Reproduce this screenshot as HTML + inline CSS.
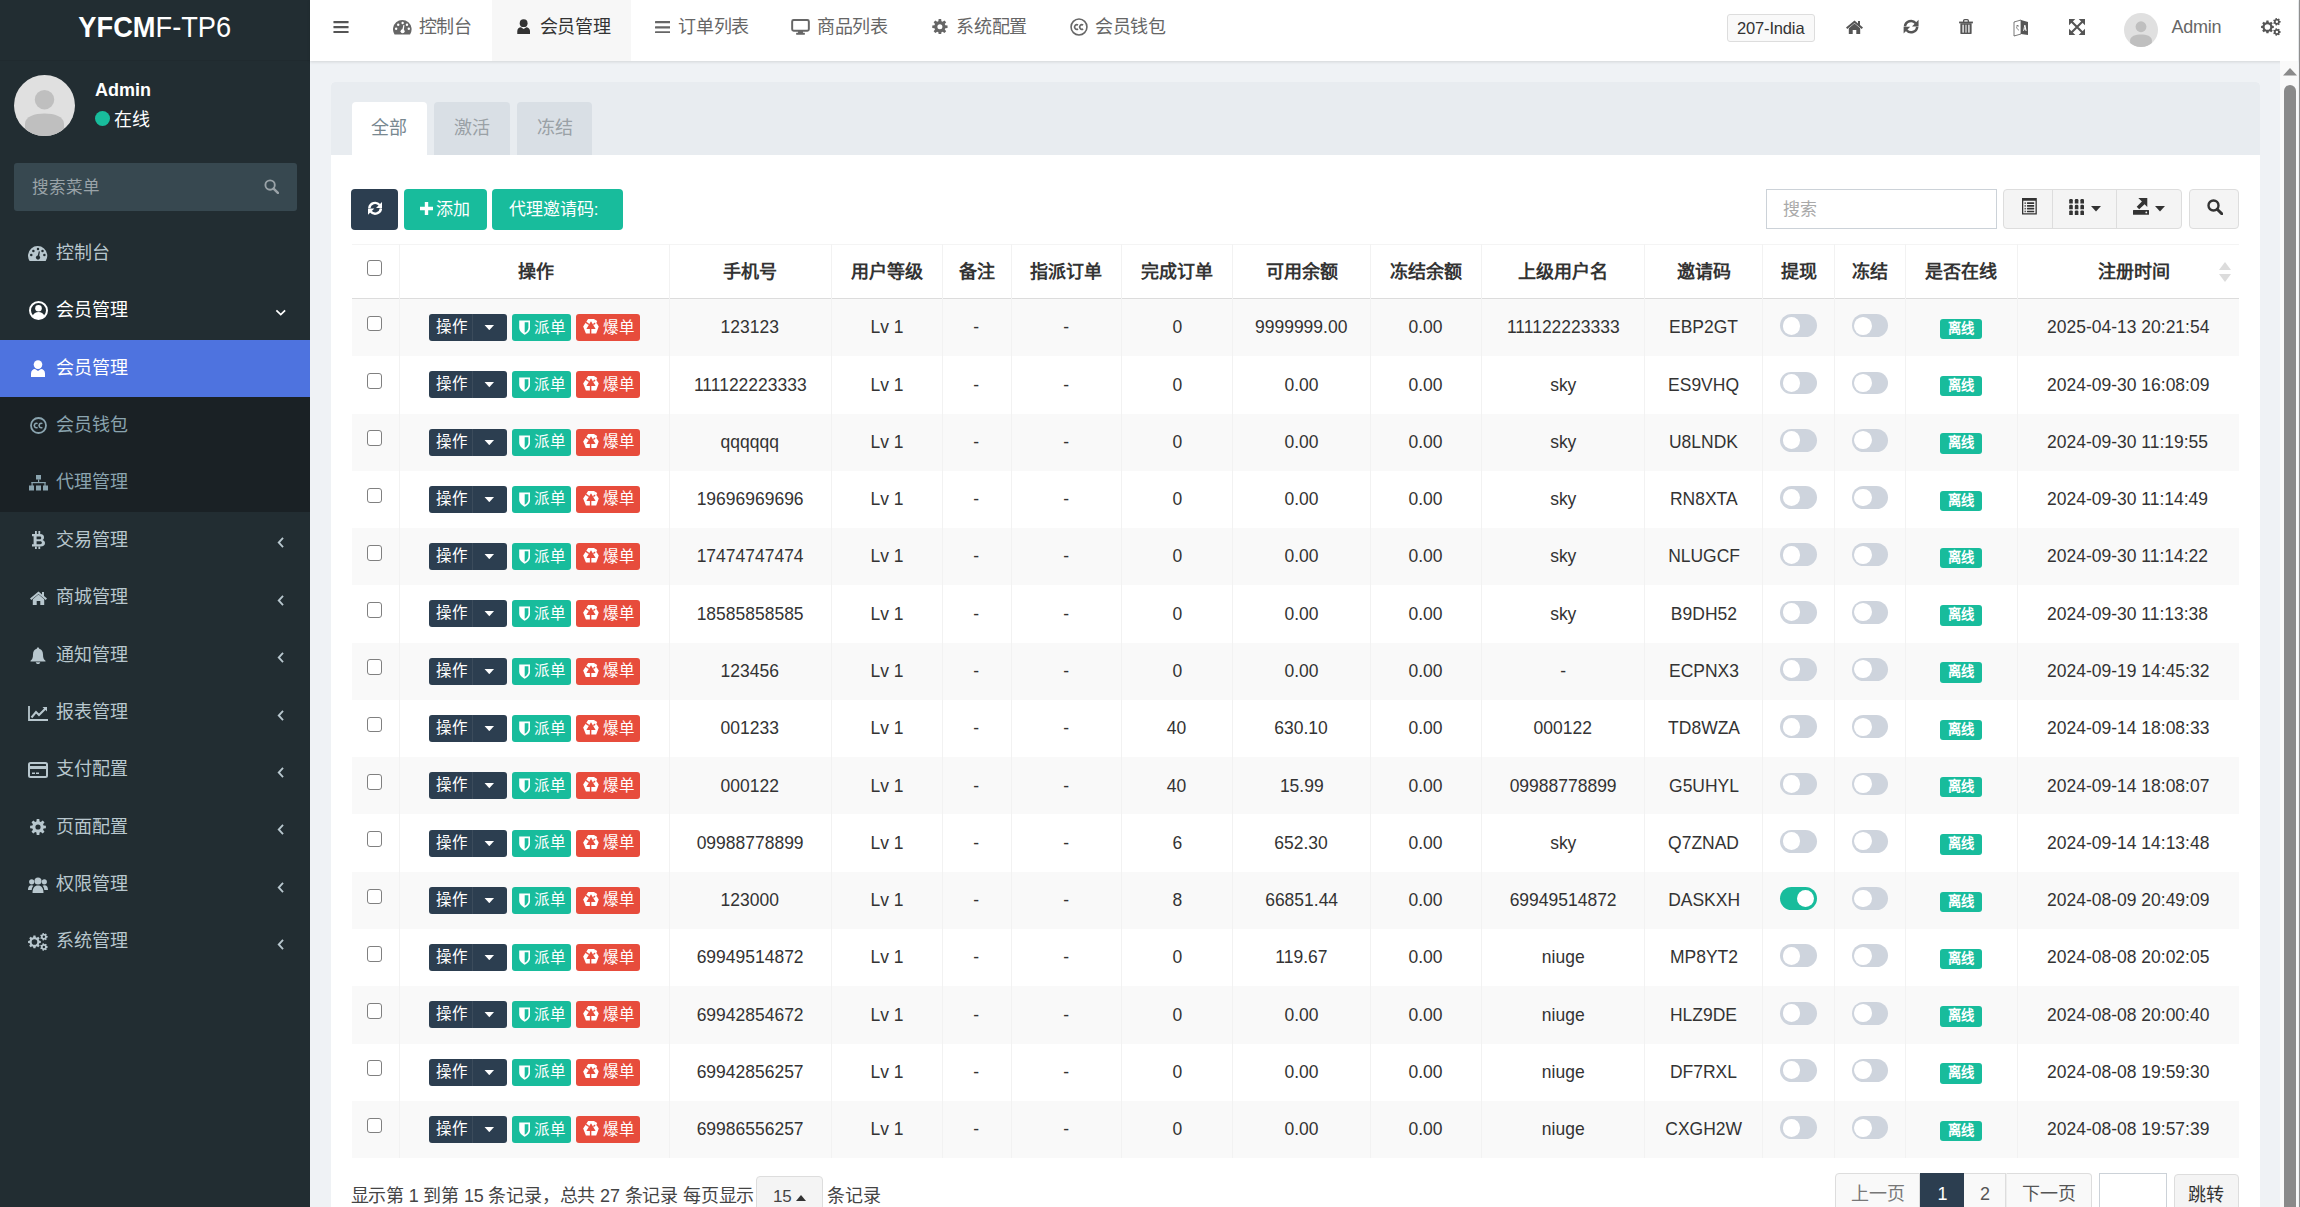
<!DOCTYPE html><html lang="zh-CN"><head><meta charset="utf-8"><style>
*{margin:0;padding:0;box-sizing:content-box}
html,body{width:2300px;height:1207px;overflow:hidden;background:#eff2f5;font-family:"Liberation Sans",sans-serif;position:relative}
svg{display:block}
#side{position:absolute;left:0;top:0;width:310px;height:1207px;background:#222d32;overflow:hidden}
.logo{position:absolute;left:0;top:0;width:310px;height:60px;line-height:53px;text-align:center;color:#fff;font-size:29.5px;border-bottom:1px solid #202a2f;letter-spacing:0}
.logo b{font-weight:bold}
#top{position:absolute;left:310px;top:0;width:1988px;height:61px;background:#fff;box-shadow:0 1px 3px rgba(0,0,0,0.12)}
#panel{position:absolute;left:331px;top:82px;width:1929px;height:1200px;background:#fff;border-radius:4px;overflow:hidden}
#phead{position:absolute;left:0;top:0;width:1929px;height:72.8px;background:#e8ecf0}
</style></head><body><div id="side"><div class="logo"><span style="display:inline-block;transform:scaleX(0.923);transform-origin:50% 50%"><b>YFCM</b>F-TP6</span></div><div style="position:absolute;left:13.7px;top:74.6px;"><svg width="61" height="61" viewBox="0 0 100 100" style=""><defs><clipPath id="cp61"><circle cx="50" cy="50" r="50"/></clipPath></defs><circle cx="50" cy="50" r="50" fill="#e0e0e0"/><g clip-path="url(#cp61)"><circle cx="50" cy="40.5" r="16" fill="#bfbfbf"/><path d="M18 100 L18 80 C18 68 34 63 50 63 C66 63 82 68 82 80 L82 100 Z" fill="#bfbfbf"/></g></svg></div><div style="position:absolute;left:95px;top:79.2px;font-weight:bold;font-size:18px;color:#fff;line-height:22px">Admin</div><div style="position:absolute;left:95px;top:111px;width:15px;height:15px;border-radius:50%;background:#18bc9c"></div><div style="position:absolute;left:114px;top:109px;font-size:18px;color:#fff;line-height:22px">在线</div><div style="position:absolute;left:13.9px;top:162.5px;width:283px;height:48.5px;background:#374850;border-radius:3px"><span style="position:absolute;left:18px;top:13px;color:#9aa3a8;font-size:16.5px;line-height:22px">搜索菜单</span><div style="position:absolute;left:250px;top:16px;"><svg width="15" height="15" viewBox="0 0 16 16" style=""><circle cx="6.5" cy="6.5" r="5" fill="none" stroke="#9aa3a8" stroke-width="2.0"/><path d="M10.2 10.2 L14.8 14.8" stroke="#9aa3a8" stroke-width="2.6" stroke-linecap="round"/></svg></div></div><div style="position:absolute;left:0px;top:224.9px;width:310px;height:57.38px;background:#222d32"><span class="mi" style="position:absolute;left:28px;top:0;width:20px;height:57.38px;display:flex;align-items:center;justify-content:center"><svg width="19.3" height="15" viewBox="0 0 19.3 15" style=""><path fill="#b8c7ce" d="M1.62 15 A9.65 9.65 0 1 1 17.68 15 Z"/><g fill="#222d32"><circle cx="3.25" cy="9.1" r="1.25"/><circle cx="5.4" cy="4.9" r="1.25"/><circle cx="10" cy="3.1" r="1.25"/><circle cx="14.5" cy="4.9" r="1.25"/><circle cx="16.4" cy="9.1" r="1.25"/><path d="M9.3 11.4 L10.8 5.2 L11.9 5.4 L11 11.8 Z"/><circle cx="10" cy="11.6" r="2.1"/></g></svg></span><span style="position:absolute;left:56px;top:0;line-height:57.38px;font-size:18px;color:#b8c7ce">控制台</span></div><div style="position:absolute;left:0px;top:282.28000000000003px;width:310px;height:57.38px;background:#222d32"><span class="mi" style="position:absolute;left:28px;top:0;width:20px;height:57.38px;display:flex;align-items:center;justify-content:center"><svg width="19" height="19" viewBox="0 0 19 19" style=""><circle cx="9.5" cy="9.5" r="8.5" fill="none" stroke="#fff" stroke-width="2"/><circle cx="9.5" cy="7.3" r="3.3" fill="#fff"/><path fill="#fff" d="M3.5 15.2 C4.5 12 7 11 9.5 11 C12 11 14.5 12 15.5 15.2 C14 17 12 18 9.5 18 C7 18 5 17 3.5 15.2 Z"/></svg></span><span style="position:absolute;left:56px;top:0;line-height:57.38px;font-size:18px;color:#fff">会员管理</span><div style="position:absolute;left:274.5px;top:27.19px;"><svg width="11.5" height="7" viewBox="0 0 12 8" style=""><path d="M1 1.5 L6 6.3 L11 1.5" fill="none" stroke="#fff" stroke-width="2"/></svg></div></div><div style="position:absolute;left:0px;top:339.66px;width:310px;height:57.38px;background:#4e73df"><span class="mi" style="position:absolute;left:28px;top:0;width:20px;height:57.38px;display:flex;align-items:center;justify-content:center"><svg width="14" height="17" viewBox="0 0 14 17" style=""><circle cx="7" cy="4.6" r="4.3" fill="#fff"/><path fill="#fff" d="M0 17 L0 13.5 C0 10.5 2 9 4 9 L7 11 L10 9 C12 9 14 10.5 14 13.5 L14 17 Z"/></svg></span><span style="position:absolute;left:56px;top:0;line-height:57.38px;font-size:18px;color:#fff">会员管理</span></div><div style="position:absolute;left:0px;top:397.04px;width:310px;height:57.38px;background:#1a2125"><span class="mi" style="position:absolute;left:28px;top:0;width:20px;height:57.38px;display:flex;align-items:center;justify-content:center"><svg width="17" height="17" viewBox="0 0 17 17" style=""><circle cx="8.5" cy="8.5" r="7.5" fill="none" stroke="#8aa4af" stroke-width="1.8"/><path d="M7.6 6.6 A2.2 2.2 0 1 0 7.6 10.4" fill="none" stroke="#8aa4af" stroke-width="1.6"/><path d="M12.4 6.6 A2.2 2.2 0 1 0 12.4 10.4" fill="none" stroke="#8aa4af" stroke-width="1.6"/></svg></span><span style="position:absolute;left:56px;top:0;line-height:57.38px;font-size:18px;color:#8aa4af">会员钱包</span></div><div style="position:absolute;left:0px;top:454.42px;width:310px;height:57.38px;background:#1a2125"><span class="mi" style="position:absolute;left:28px;top:0;width:20px;height:57.38px;display:flex;align-items:center;justify-content:center"><svg width="19" height="16" viewBox="0 0 19 16" style=""><rect x="7" y="0" width="5" height="4.5" fill="#8aa4af"/><rect x="9" y="4.5" width="1.2" height="3" fill="#8aa4af"/><rect x="2.5" y="7" width="14" height="1.2" fill="#8aa4af"/><rect x="2.5" y="7" width="1.2" height="4" fill="#8aa4af"/><rect x="15.4" y="7" width="1.2" height="4" fill="#8aa4af"/><rect x="0" y="10.5" width="5" height="5" fill="#8aa4af"/><rect x="7" y="10.5" width="5" height="5" fill="#8aa4af"/><rect x="14" y="10.5" width="5" height="5" fill="#8aa4af"/></svg></span><span style="position:absolute;left:56px;top:0;line-height:57.38px;font-size:18px;color:#8aa4af">代理管理</span></div><div style="position:absolute;left:0px;top:511.80000000000007px;width:310px;height:57.38px;background:#222d32"><span class="mi" style="position:absolute;left:28px;top:0;width:20px;height:57.38px;display:flex;align-items:center;justify-content:center"><svg width="13" height="18" viewBox="0 0 13 18" style=""><path fill="#b8c7ce" fill-rule="evenodd" d="M0 3 L8 3 C11 3 12 4.6 12 6.4 C12 7.8 11.2 8.5 10.4 8.9 C11.8 9.3 13 10.3 13 12 C13 14 11.6 15.5 8.5 15.5 L0 15.5 L0 13.2 L1.6 13.2 L1.6 5.3 L0 5.3 Z M4.6 5.5 L4.6 8.2 L7.8 8.2 C8.7 8.2 9.2 7.7 9.2 6.9 C9.2 6 8.7 5.5 7.8 5.5 Z M4.6 10.3 L4.6 13.2 L8.2 13.2 C9.3 13.2 9.9 12.6 9.9 11.8 C9.9 10.9 9.3 10.3 8.2 10.3 Z"/><rect x="3" y="0" width="1.8" height="3" fill="#b8c7ce"/><rect x="6.4" y="0" width="1.8" height="3" fill="#b8c7ce"/><rect x="3" y="15.5" width="1.8" height="2.5" fill="#b8c7ce"/><rect x="6.4" y="15.5" width="1.8" height="2.5" fill="#b8c7ce"/></svg></span><span style="position:absolute;left:56px;top:0;line-height:57.38px;font-size:18px;color:#b8c7ce">交易管理</span><div style="position:absolute;left:277px;top:25.69px;"><svg width="7.5" height="11" viewBox="0 0 8 12" style=""><path d="M6.5 1 L1.8 6 L6.5 11" fill="none" stroke="#b8c7ce" stroke-width="2"/></svg></div></div><div style="position:absolute;left:0px;top:569.1800000000001px;width:310px;height:57.38px;background:#222d32"><span class="mi" style="position:absolute;left:28px;top:0;width:20px;height:57.38px;display:flex;align-items:center;justify-content:center"><svg width="17" height="14" viewBox="0 0 17 14" style=""><path fill="#b8c7ce" d="M8.5 0.5 L0 7.6 L1.3 9 L8.5 3 L15.7 9 L17 7.6 L14 5.1 L14 1 L12 1 L12 3.4 Z"/><path fill="#b8c7ce" d="M2.8 8.2 L8.5 3.6 L14.2 8.2 L14.2 14 L10.3 14 L10.3 10 L6.7 10 L6.7 14 L2.8 14 Z"/></svg></span><span style="position:absolute;left:56px;top:0;line-height:57.38px;font-size:18px;color:#b8c7ce">商城管理</span><div style="position:absolute;left:277px;top:25.69px;"><svg width="7.5" height="11" viewBox="0 0 8 12" style=""><path d="M6.5 1 L1.8 6 L6.5 11" fill="none" stroke="#b8c7ce" stroke-width="2"/></svg></div></div><div style="position:absolute;left:0px;top:626.5600000000001px;width:310px;height:57.38px;background:#222d32"><span class="mi" style="position:absolute;left:28px;top:0;width:20px;height:57.38px;display:flex;align-items:center;justify-content:center"><svg width="16" height="17" viewBox="0 0 16 17" style=""><path fill="#b8c7ce" d="M8 0.5 C8.8 0.5 9.2 1 9.2 1.7 C11.8 2.3 13 4.5 13 7.5 C13 11 13.8 12.5 15.5 13.8 L15.5 14.5 L0.5 14.5 L0.5 13.8 C2.2 12.5 3 11 3 7.5 C3 4.5 4.2 2.3 6.8 1.7 C6.8 1 7.2 0.5 8 0.5 Z"/><path fill="#b8c7ce" d="M5.8 15.2 L10.2 15.2 C10.2 16.3 9.2 17 8 17 C6.8 17 5.8 16.3 5.8 15.2 Z"/></svg></span><span style="position:absolute;left:56px;top:0;line-height:57.38px;font-size:18px;color:#b8c7ce">通知管理</span><div style="position:absolute;left:277px;top:25.69px;"><svg width="7.5" height="11" viewBox="0 0 8 12" style=""><path d="M6.5 1 L1.8 6 L6.5 11" fill="none" stroke="#b8c7ce" stroke-width="2"/></svg></div></div><div style="position:absolute;left:0px;top:683.94px;width:310px;height:57.38px;background:#222d32"><span class="mi" style="position:absolute;left:28px;top:0;width:20px;height:57.38px;display:flex;align-items:center;justify-content:center"><svg width="20" height="16" viewBox="0 0 20 16" style=""><path fill="none" stroke="#b8c7ce" stroke-width="1.8" d="M1 1 L1 15 L20 15"/><path fill="none" stroke="#b8c7ce" stroke-width="2" d="M3.5 12.5 L8 7 L11 10 L17.5 3.5"/><path fill="#b8c7ce" d="M14.5 2 L19 2 L19 6.5 Z"/></svg></span><span style="position:absolute;left:56px;top:0;line-height:57.38px;font-size:18px;color:#b8c7ce">报表管理</span><div style="position:absolute;left:277px;top:25.69px;"><svg width="7.5" height="11" viewBox="0 0 8 12" style=""><path d="M6.5 1 L1.8 6 L6.5 11" fill="none" stroke="#b8c7ce" stroke-width="2"/></svg></div></div><div style="position:absolute;left:0px;top:741.32px;width:310px;height:57.38px;background:#222d32"><span class="mi" style="position:absolute;left:28px;top:0;width:20px;height:57.38px;display:flex;align-items:center;justify-content:center"><svg width="20" height="16" viewBox="0 0 20 16" style=""><rect x="1" y="1" width="18" height="14" rx="1.5" fill="none" stroke="#b8c7ce" stroke-width="2"/><rect x="1" y="4" width="18" height="3" fill="#b8c7ce"/><rect x="4" y="10.5" width="3" height="1.5" fill="#b8c7ce"/><rect x="8" y="10.5" width="3" height="1.5" fill="#b8c7ce"/></svg></span><span style="position:absolute;left:56px;top:0;line-height:57.38px;font-size:18px;color:#b8c7ce">支付配置</span><div style="position:absolute;left:277px;top:25.69px;"><svg width="7.5" height="11" viewBox="0 0 8 12" style=""><path d="M6.5 1 L1.8 6 L6.5 11" fill="none" stroke="#b8c7ce" stroke-width="2"/></svg></div></div><div style="position:absolute;left:0px;top:798.7px;width:310px;height:57.38px;background:#222d32"><span class="mi" style="position:absolute;left:28px;top:0;width:20px;height:57.38px;display:flex;align-items:center;justify-content:center"><svg width="16" height="16" viewBox="0 0 16 16" style=""><path fill="#b8c7ce" fill-rule="evenodd" d="M13.58 6.42 L15.89 6.70 L15.89 9.30 L13.58 9.58 L13.06 10.83 L14.50 12.66 L12.66 14.50 L10.83 13.06 L9.58 13.58 L9.30 15.89 L6.70 15.89 L6.42 13.58 L5.17 13.06 L3.34 14.50 L1.50 12.66 L2.94 10.83 L2.42 9.58 L0.11 9.30 L0.11 6.70 L2.42 6.42 L2.94 5.17 L1.50 3.34 L3.34 1.50 L5.17 2.94 L6.42 2.42 L6.70 0.11 L9.30 0.11 L9.58 2.42 L10.83 2.94 L12.66 1.50 L14.50 3.34 L13.06 5.17 Z M10.6 8 A2.6 2.6 0 1 0 5.4 8 A2.6 2.6 0 1 0 10.6 8 Z"/></svg></span><span style="position:absolute;left:56px;top:0;line-height:57.38px;font-size:18px;color:#b8c7ce">页面配置</span><div style="position:absolute;left:277px;top:25.69px;"><svg width="7.5" height="11" viewBox="0 0 8 12" style=""><path d="M6.5 1 L1.8 6 L6.5 11" fill="none" stroke="#b8c7ce" stroke-width="2"/></svg></div></div><div style="position:absolute;left:0px;top:856.08px;width:310px;height:57.38px;background:#222d32"><span class="mi" style="position:absolute;left:28px;top:0;width:20px;height:57.38px;display:flex;align-items:center;justify-content:center"><svg width="20" height="16" viewBox="0 0 20 16" style=""><circle cx="10" cy="4" r="3.5" fill="#b8c7ce"/><path fill="#b8c7ce" d="M4.5 16 C4.5 11 6.5 8.5 10 8.5 C13.5 8.5 15.5 11 15.5 16 Z"/><circle cx="3.7" cy="4.8" r="2.6" fill="#b8c7ce"/><path fill="#b8c7ce" d="M0 13 C0 10 1 8.2 3.7 8.2 C4.5 8.2 5 8.5 5.4 8.8 C4.3 10 3.8 11.5 3.7 13 Z"/><circle cx="16.3" cy="4.8" r="2.6" fill="#b8c7ce"/><path fill="#b8c7ce" d="M20 13 C20 10 19 8.2 16.3 8.2 C15.5 8.2 15 8.5 14.6 8.8 C15.7 10 16.2 11.5 16.3 13 Z"/></svg></span><span style="position:absolute;left:56px;top:0;line-height:57.38px;font-size:18px;color:#b8c7ce">权限管理</span><div style="position:absolute;left:277px;top:25.69px;"><svg width="7.5" height="11" viewBox="0 0 8 12" style=""><path d="M6.5 1 L1.8 6 L6.5 11" fill="none" stroke="#b8c7ce" stroke-width="2"/></svg></div></div><div style="position:absolute;left:0px;top:913.46px;width:310px;height:57.38px;background:#222d32"><span class="mi" style="position:absolute;left:28px;top:0;width:20px;height:57.38px;display:flex;align-items:center;justify-content:center"><svg width="19.7" height="17.8" viewBox="0 0 19.7 17.8" style=""><path fill="#b8c7ce" fill-rule="evenodd" d="M11.16 7.61 L12.81 7.90 L12.81 10.00 L11.16 10.29 L10.73 11.34 L11.69 12.71 L10.21 14.19 L8.84 13.23 L7.79 13.66 L7.50 15.31 L5.40 15.31 L5.11 13.66 L4.06 13.23 L2.69 14.19 L1.21 12.71 L2.17 11.34 L1.74 10.29 L0.09 10.00 L0.09 7.90 L1.74 7.61 L2.17 6.56 L1.21 5.19 L2.69 3.71 L4.06 4.67 L5.11 4.24 L5.40 2.59 L7.50 2.59 L7.79 4.24 L8.84 4.67 L10.21 3.71 L11.69 5.19 L10.73 6.56 Z M9.25 8.95 A2.8 2.8 0 1 0 3.6500000000000004 8.95 A2.8 2.8 0 1 0 9.25 8.95 Z"/><path fill="#b8c7ce" fill-rule="evenodd" d="M18.66 2.90 L19.63 3.09 L19.63 4.51 L18.66 4.70 L18.32 5.39 L18.78 6.28 L17.68 7.16 L16.91 6.52 L16.17 6.69 L15.76 7.60 L14.38 7.28 L14.41 6.29 L13.81 5.81 L12.84 6.06 L12.23 4.78 L13.03 4.18 L13.03 3.42 L12.23 2.82 L12.84 1.54 L13.81 1.79 L14.41 1.31 L14.38 0.32 L15.76 0.00 L16.17 0.91 L16.91 1.08 L17.68 0.44 L18.78 1.32 L18.32 2.21 Z M17.1 3.8 A1.2 1.2 0 1 0 14.700000000000001 3.8 A1.2 1.2 0 1 0 17.1 3.8 Z"/><path fill="#b8c7ce" fill-rule="evenodd" d="M18.66 13.10 L19.63 13.29 L19.63 14.71 L18.66 14.90 L18.32 15.59 L18.78 16.48 L17.68 17.36 L16.91 16.72 L16.17 16.89 L15.76 17.80 L14.38 17.48 L14.41 16.49 L13.81 16.01 L12.84 16.26 L12.23 14.98 L13.03 14.38 L13.03 13.62 L12.23 13.02 L12.84 11.74 L13.81 11.99 L14.41 11.51 L14.38 10.52 L15.76 10.20 L16.17 11.11 L16.91 11.28 L17.68 10.64 L18.78 11.52 L18.32 12.41 Z M17.1 14.0 A1.2 1.2 0 1 0 14.700000000000001 14.0 A1.2 1.2 0 1 0 17.1 14.0 Z"/></svg></span><span style="position:absolute;left:56px;top:0;line-height:57.38px;font-size:18px;color:#b8c7ce">系统管理</span><div style="position:absolute;left:277px;top:25.69px;"><svg width="7.5" height="11" viewBox="0 0 8 12" style=""><path d="M6.5 1 L1.8 6 L6.5 11" fill="none" stroke="#b8c7ce" stroke-width="2"/></svg></div></div></div><div id="top"><div style="position:absolute;left:23px;top:20.7px;"><svg width="16" height="12.3" viewBox="0 0 16 13" style=""><rect x="0" y="0" width="16" height="2.4" rx="0.6" fill="#555"/><rect x="0" y="5.3" width="16" height="2.4" rx="0.6" fill="#555"/><rect x="0" y="10.6" width="16" height="2.4" rx="0.6" fill="#555"/></svg></div><div style="position:absolute;left:182px;top:0px;width:139px;height:61px;background:#f7f7f7"></div><div style="position:absolute;left:83.30000000000001px;top:20.2px;"><svg width="18.6" height="14.5" viewBox="0 0 19.3 15" style=""><path fill="#666" d="M1.62 15 A9.65 9.65 0 1 1 17.68 15 Z"/><g fill="#fff"><circle cx="3.25" cy="9.1" r="1.25"/><circle cx="5.4" cy="4.9" r="1.25"/><circle cx="10" cy="3.1" r="1.25"/><circle cx="14.5" cy="4.9" r="1.25"/><circle cx="16.4" cy="9.1" r="1.25"/><path d="M9.3 11.4 L10.8 5.2 L11.9 5.4 L11 11.8 Z"/><circle cx="10" cy="11.6" r="2.1"/></g></svg></div><div style="position:absolute;left:108.5px;top:0px;line-height:55px;font-size:18px;color:#666;white-space:nowrap;letter-spacing:-0.35px">控制台</div><div style="position:absolute;left:207px;top:18.8px;"><svg width="13.3" height="15.5" viewBox="0 0 14 17" style=""><circle cx="7" cy="4.6" r="4.3" fill="#333"/><path fill="#333" d="M0 17 L0 13.5 C0 10.5 2 9 4 9 L7 11 L10 9 C12 9 14 10.5 14 13.5 L14 17 Z"/></svg></div><div style="position:absolute;left:229.70000000000005px;top:0px;line-height:55px;font-size:18px;color:#333;white-space:nowrap;letter-spacing:-0.35px">会员管理</div><div style="position:absolute;left:344.79999999999995px;top:20.6px;"><svg width="15.6" height="12.7" viewBox="0 0 16 13" style=""><rect x="0" y="0" width="16" height="2.4" rx="0.6" fill="#666"/><rect x="0" y="5.3" width="16" height="2.4" rx="0.6" fill="#666"/><rect x="0" y="10.6" width="16" height="2.4" rx="0.6" fill="#666"/></svg></div><div style="position:absolute;left:368.4px;top:0px;line-height:55px;font-size:18px;color:#666;white-space:nowrap;letter-spacing:-0.35px">订单列表</div><div style="position:absolute;left:480.9px;top:19.1px;"><svg width="19" height="15.7" viewBox="0 0 19 16" style=""><rect x="1" y="1" width="17" height="11" rx="1.5" fill="none" stroke="#666" stroke-width="2"/><rect x="7" y="12" width="5" height="2.5" fill="#666"/><rect x="5" y="14" width="9" height="2" rx="0.5" fill="#666"/></svg></div><div style="position:absolute;left:507.1px;top:0px;line-height:55px;font-size:18px;color:#666;white-space:nowrap;letter-spacing:-0.35px">商品列表</div><div style="position:absolute;left:621.9px;top:18.8px;"><svg width="15.8" height="15.5" viewBox="0 0 16 16" style=""><path fill="#666" fill-rule="evenodd" d="M13.58 6.42 L15.89 6.70 L15.89 9.30 L13.58 9.58 L13.06 10.83 L14.50 12.66 L12.66 14.50 L10.83 13.06 L9.58 13.58 L9.30 15.89 L6.70 15.89 L6.42 13.58 L5.17 13.06 L3.34 14.50 L1.50 12.66 L2.94 10.83 L2.42 9.58 L0.11 9.30 L0.11 6.70 L2.42 6.42 L2.94 5.17 L1.50 3.34 L3.34 1.50 L5.17 2.94 L6.42 2.42 L6.70 0.11 L9.30 0.11 L9.58 2.42 L10.83 2.94 L12.66 1.50 L14.50 3.34 L13.06 5.17 Z M10.6 8 A2.6 2.6 0 1 0 5.4 8 A2.6 2.6 0 1 0 10.6 8 Z"/></svg></div><div style="position:absolute;left:646.4px;top:0px;line-height:55px;font-size:18px;color:#666;white-space:nowrap;letter-spacing:-0.35px">系统配置</div><div style="position:absolute;left:759.8px;top:17.9px;"><svg width="18" height="18" viewBox="0 0 17 17" style=""><circle cx="8.5" cy="8.5" r="7.5" fill="none" stroke="#666" stroke-width="1.5"/><path d="M7.6 6.6 A2.2 2.2 0 1 0 7.6 10.4" fill="none" stroke="#666" stroke-width="1.6"/><path d="M12.4 6.6 A2.2 2.2 0 1 0 12.4 10.4" fill="none" stroke="#666" stroke-width="1.6"/></svg></div><div style="position:absolute;left:784.9000000000001px;top:0px;line-height:55px;font-size:18px;color:#666;white-space:nowrap;letter-spacing:-0.35px">会员钱包</div><div style="position:absolute;left:1416.7px;top:13.7px;width:86px;height:26px;border:1px solid #ddd;border-radius:3px;background:#f9f9f9;font-size:16.5px;line-height:26px;text-align:center;color:#333;letter-spacing:-0.15px">207-India</div><div style="position:absolute;left:1536.3px;top:19.6px;"><svg width="17" height="14" viewBox="0 0 17 14" style=""><path fill="#555" d="M8.5 0.5 L0 7.6 L1.3 9 L8.5 3 L15.7 9 L17 7.6 L14 5.1 L14 1 L12 1 L12 3.4 Z"/><path fill="#555" d="M2.8 8.2 L8.5 3.6 L14.2 8.2 L14.2 14 L10.3 14 L10.3 10 L6.7 10 L6.7 14 L2.8 14 Z"/></svg></div><div style="position:absolute;left:1593.4px;top:18.9px;"><svg width="16.2" height="15.3" viewBox="0 0 14.3 14.6" style=""><path fill="none" stroke="#555" stroke-width="2.4" d="M1.3 7.1 A5.8 5.8 0 0 1 11.6 4.1"/><path fill="#555" d="M14.3 0.8 L14.3 7.1 L8 7.1 Z"/><path fill="none" stroke="#555" stroke-width="2.4" d="M13 7.5 A5.8 5.8 0 0 1 2.7 10.5"/><path fill="#555" d="M0 13.8 L0 7.5 L6.3 7.5 Z"/></svg></div><div style="position:absolute;left:1649.1px;top:18.9px;"><svg width="14" height="15.3" viewBox="0 0 14 15.5" style=""><path fill="none" stroke="#555" stroke-width="1.3" d="M4.6 3 L4.6 1.8 Q4.6 0.7 5.7 0.7 L8.3 0.7 Q9.4 0.7 9.4 1.8 L9.4 3"/><rect x="0" y="2.6" width="14" height="1.8" fill="#555"/><path fill="#555" d="M1.3 4.4 L12.7 4.4 L12.7 14.3 Q12.7 15.5 11.5 15.5 L2.5 15.5 Q1.3 15.5 1.3 14.3 Z"/><rect x="3.4" y="5.8" width="1.3" height="8" fill="#fff"/><rect x="6.35" y="5.8" width="1.3" height="8" fill="#ddd"/><rect x="9.3" y="5.8" width="1.3" height="8" fill="#fff"/></svg></div><div style="position:absolute;left:1703px;top:17.6px;"><svg width="16" height="19" viewBox="0 0 16 19" style=""><path fill="none" stroke="#555" stroke-width="0.8" d="M1 4 L8 2 L8 16 L1 18 Z"/><path fill="#555" d="M8 2 L15 4 L15 17 L8 16 Z"/><path fill="#fff" d="M10.2 13 L11.3 7 L12.4 7 L13.6 13 L12.6 13 L12.3 11.5 L11.3 11.5 L11 13 Z M11.5 10.5 L12.1 10.5 L11.8 8.5 Z"/><path fill="none" stroke="#555" stroke-width="0.7" d="M3 8 L6 8 M4.5 7 L4.5 8 M3.5 9 C4 11 5 12 6 12"/></svg></div><div style="position:absolute;left:1758.5px;top:18.9px;"><svg width="16" height="16" viewBox="0 0 16 16" style=""><path fill="#555" d="M0 0 L6.3 0 L0 6.3 Z M16 0 L16 6.3 L9.7 0 Z M0 16 L0 9.7 L6.3 16 Z M16 16 L9.7 16 L16 9.7 Z"/><path stroke="#555" stroke-width="2.1" d="M2 2 L14 14 M14 2 L2 14"/></svg></div><div style="position:absolute;left:1813.9px;top:13px;"><svg width="34" height="34" viewBox="0 0 100 100" style=""><defs><clipPath id="cp34"><circle cx="50" cy="50" r="50"/></clipPath></defs><circle cx="50" cy="50" r="50" fill="#e0e0e0"/><g clip-path="url(#cp34)"><circle cx="50" cy="40.5" r="16" fill="#bfbfbf"/><path d="M18 100 L18 80 C18 68 34 63 50 63 C66 63 82 68 82 80 L82 100 Z" fill="#bfbfbf"/></g></svg></div><div style="position:absolute;left:1861.5px;top:14px;font-size:18px;line-height:26px;color:#666;letter-spacing:-0.25px">Admin</div><div style="position:absolute;left:1951px;top:17.9px;"><svg width="19.7" height="17.8" viewBox="0 0 19.7 17.8" style=""><path fill="#555" fill-rule="evenodd" d="M11.16 7.61 L12.81 7.90 L12.81 10.00 L11.16 10.29 L10.73 11.34 L11.69 12.71 L10.21 14.19 L8.84 13.23 L7.79 13.66 L7.50 15.31 L5.40 15.31 L5.11 13.66 L4.06 13.23 L2.69 14.19 L1.21 12.71 L2.17 11.34 L1.74 10.29 L0.09 10.00 L0.09 7.90 L1.74 7.61 L2.17 6.56 L1.21 5.19 L2.69 3.71 L4.06 4.67 L5.11 4.24 L5.40 2.59 L7.50 2.59 L7.79 4.24 L8.84 4.67 L10.21 3.71 L11.69 5.19 L10.73 6.56 Z M9.25 8.95 A2.8 2.8 0 1 0 3.6500000000000004 8.95 A2.8 2.8 0 1 0 9.25 8.95 Z"/><path fill="#555" fill-rule="evenodd" d="M18.66 2.90 L19.63 3.09 L19.63 4.51 L18.66 4.70 L18.32 5.39 L18.78 6.28 L17.68 7.16 L16.91 6.52 L16.17 6.69 L15.76 7.60 L14.38 7.28 L14.41 6.29 L13.81 5.81 L12.84 6.06 L12.23 4.78 L13.03 4.18 L13.03 3.42 L12.23 2.82 L12.84 1.54 L13.81 1.79 L14.41 1.31 L14.38 0.32 L15.76 0.00 L16.17 0.91 L16.91 1.08 L17.68 0.44 L18.78 1.32 L18.32 2.21 Z M17.1 3.8 A1.2 1.2 0 1 0 14.700000000000001 3.8 A1.2 1.2 0 1 0 17.1 3.8 Z"/><path fill="#555" fill-rule="evenodd" d="M18.66 13.10 L19.63 13.29 L19.63 14.71 L18.66 14.90 L18.32 15.59 L18.78 16.48 L17.68 17.36 L16.91 16.72 L16.17 16.89 L15.76 17.80 L14.38 17.48 L14.41 16.49 L13.81 16.01 L12.84 16.26 L12.23 14.98 L13.03 14.38 L13.03 13.62 L12.23 13.02 L12.84 11.74 L13.81 11.99 L14.41 11.51 L14.38 10.52 L15.76 10.20 L16.17 11.11 L16.91 11.28 L17.68 10.64 L18.78 11.52 L18.32 12.41 Z M17.1 14.0 A1.2 1.2 0 1 0 14.700000000000001 14.0 A1.2 1.2 0 1 0 17.1 14.0 Z"/></svg></div></div><div id="panel"><div id="phead"></div></div><div style="position:absolute;left:351.8px;top:102.2px;width:75.2px;height:53px;background:#fff;border-radius:4px 4px 0 0;text-align:center;line-height:52px;font-size:18px;color:#788890">全部</div><div style="position:absolute;left:433.9px;top:102.2px;width:76.1px;height:53px;background:#d9dfe5;border-radius:4px 4px 0 0;text-align:center;line-height:52px;font-size:18px;color:#9aa1a6">激活</div><div style="position:absolute;left:516.8px;top:102.2px;width:75.5px;height:53px;background:#d9dfe5;border-radius:4px 4px 0 0;text-align:center;line-height:52px;font-size:18px;color:#9aa1a6">冻结</div><div style="position:absolute;left:350.8px;top:188.6px;width:47.3px;height:41.4px;background:#2c3e50;border-radius:4px"><div style="position:absolute;left:16.9px;top:12.1px;"><svg width="14.3" height="14.6" viewBox="0 0 14.3 14.6" style=""><path fill="none" stroke="#fff" stroke-width="2.4" d="M1.3 7.1 A5.8 5.8 0 0 1 11.6 4.1"/><path fill="#fff" d="M14.3 0.8 L14.3 7.1 L8 7.1 Z"/><path fill="none" stroke="#fff" stroke-width="2.4" d="M13 7.5 A5.8 5.8 0 0 1 2.7 10.5"/><path fill="#fff" d="M0 13.8 L0 7.5 L6.3 7.5 Z"/></svg></div></div><div style="position:absolute;left:403.9px;top:188.6px;width:83.2px;height:41.4px;background:#18bc9c;border-radius:4px;color:#fff;font-size:17px;line-height:41px;text-align:center"><span style="display:inline-block;vertical-align:middle;margin-right:3px;margin-top:-3px"><svg width="13" height="13" viewBox="0 0 13 13" style=""><path fill="#fff" d="M4.8 0 L8.2 0 L8.2 4.8 L13 4.8 L13 8.2 L8.2 8.2 L8.2 13 L4.8 13 L4.8 8.2 L0 8.2 L0 4.8 L4.8 4.8 Z"/></svg></span>添加</div><div style="position:absolute;left:491.8px;top:188.6px;width:131.2px;height:41.4px;background:#18bc9c;border-radius:4px;color:#fff;font-size:17px;line-height:41px"><span style="position:absolute;left:17px;top:0">代理邀请码:</span></div><div style="position:absolute;left:1766.2px;top:188.8px;width:228.4px;height:38.6px;border:1px solid #ccd2d8;background:#fff"><span style="position:absolute;left:16px;top:0;line-height:40px;font-size:17px;color:#a9a9a9">搜索</span></div><div style="position:absolute;left:2003.4px;top:188.8px;width:177px;height:38.6px;border:1px solid #ddd;border-radius:4px;background:#f4f4f4"></div><div style="position:absolute;left:2052.4px;top:189.8px;width:1px;height:38.6px;background:#ddd"></div><div style="position:absolute;left:2115.8px;top:189.8px;width:1px;height:38.6px;background:#ddd"></div><div style="position:absolute;left:2022.2px;top:198.1px;"><svg width="14.8" height="16.7" viewBox="0 0 15 16.7" style=""><path fill="#333" fill-rule="evenodd" d="M0 0 L15 0 L15 16.7 L0 16.7 Z M1.3 2.6 L1.3 15.4 L13.7 15.4 L13.7 2.6 Z"/><rect x="2.6" y="4.3" width="1.2" height="1.6" fill="#333"/><rect x="5" y="4.3" width="7.4" height="1.6" rx="0.4" fill="#333"/><rect x="2.6" y="7.1" width="1.2" height="1.6" fill="#333"/><rect x="5" y="7.1" width="7.4" height="1.6" rx="0.4" fill="#333"/><rect x="2.6" y="9.9" width="1.2" height="1.6" fill="#333"/><rect x="5" y="9.9" width="7.4" height="1.6" rx="0.4" fill="#333"/><rect x="2.6" y="12.7" width="1.2" height="1.6" fill="#333"/><rect x="5" y="12.7" width="7.4" height="1.6" rx="0.4" fill="#333"/></svg></div><div style="position:absolute;left:2069.1px;top:198.9px;"><svg width="16" height="16" viewBox="0 0 16 16" style=""><path d="M0.2 4.6 L0.2 1.2 Q0.2 0 1.4 0 L2.6 0 Q3.8000000000000003 0 3.8000000000000003 1.2 L3.8000000000000003 4.6 Z" fill="#333"/><path d="M0.2 10.3 L0.2 6.9 Q0.2 5.7 1.4 5.7 L2.6 5.7 Q3.8000000000000003 5.7 3.8000000000000003 6.9 L3.8000000000000003 10.3 Z" fill="#333"/><path d="M0.2 16.0 L0.2 12.6 Q0.2 11.4 1.4 11.4 L2.6 11.4 Q3.8000000000000003 11.4 3.8000000000000003 12.6 L3.8000000000000003 16.0 Z" fill="#333"/><path d="M5.8 4.6 L5.8 1.2 Q5.8 0 7.0 0 L8.2 0 Q9.4 0 9.4 1.2 L9.4 4.6 Z" fill="#333"/><path d="M5.8 10.3 L5.8 6.9 Q5.8 5.7 7.0 5.7 L8.2 5.7 Q9.4 5.7 9.4 6.9 L9.4 10.3 Z" fill="#333"/><path d="M5.8 16.0 L5.8 12.6 Q5.8 11.4 7.0 11.4 L8.2 11.4 Q9.4 11.4 9.4 12.6 L9.4 16.0 Z" fill="#333"/><path d="M11.4 4.6 L11.4 1.2 Q11.4 0 12.6 0 L13.8 0 Q15.0 0 15.0 1.2 L15.0 4.6 Z" fill="#333"/><path d="M11.4 10.3 L11.4 6.9 Q11.4 5.7 12.6 5.7 L13.8 5.7 Q15.0 5.7 15.0 6.9 L15.0 10.3 Z" fill="#333"/><path d="M11.4 16.0 L11.4 12.6 Q11.4 11.4 12.6 11.4 L13.8 11.4 Q15.0 11.4 15.0 12.6 L15.0 16.0 Z" fill="#333"/></svg></div><div style="position:absolute;left:2090.6px;top:206.3px;"><svg width="10" height="5.5" viewBox="0 0 11 6" style=""><path d="M0 0 L11 0 L5.5 6 Z" fill="#333"/></svg></div><div style="position:absolute;left:2133px;top:198.1px;"><svg width="16" height="16.7" viewBox="0 0 16 16.7" style=""><path fill="#333" d="M0.4 12.1 L15.6 12.1 Q16 12.1 16 12.6 L16 16.2 Q16 16.7 15.5 16.7 L0.5 16.7 Q0 16.7 0 16.2 L0 12.6 Q0 12.1 0.4 12.1 Z"/><circle cx="13.3" cy="14.4" r="0.9" fill="#f4f4f4"/><path fill="#333" d="M5.3 0 L14.3 0 L14.3 9 L11.6 6.3 L6.2 11.2 L3.7 8.7 L8.9 3.4 Z"/></svg></div><div style="position:absolute;left:2155.2px;top:206.3px;"><svg width="10" height="5.5" viewBox="0 0 11 6" style=""><path d="M0 0 L11 0 L5.5 6 Z" fill="#333"/></svg></div><div style="position:absolute;left:2189px;top:188.8px;width:48px;height:38.6px;border:1px solid #ddd;border-radius:4px;background:#f4f4f4"><div style="position:absolute;left:16.5px;top:9.5px;"><svg width="16" height="16" viewBox="0 0 16 16" style=""><circle cx="6.5" cy="6.5" r="5" fill="none" stroke="#333" stroke-width="2.4"/><path d="M10.2 10.2 L14.8 14.8" stroke="#333" stroke-width="3.0" stroke-linecap="round"/></svg></div></div><div style="position:absolute;left:351.5px;top:243.6px;width:1887px;"><div style="position:absolute;left:0px;top:0px;width:1887.1999999999998px;height:55.4px;background:#fff;border-top:1px solid #f4f4f4;box-sizing:border-box"></div><div style="position:absolute;left:15.6px;top:16.4px;width:13.1px;height:13.7px;border:1.3px solid #808080;border-radius:3px;background:#fff"></div><div style="position:absolute;left:49.39999999999998px;top:1.2px;width:269.6px;height:54.4px;line-height:54.4px;text-align:center;font-weight:bold;font-size:18px;color:#333">操作</div><div style="position:absolute;left:317.5px;top:1.2px;width:162px;height:54.4px;line-height:54.4px;text-align:center;font-weight:bold;font-size:18px;color:#333">手机号</div><div style="position:absolute;left:479.5px;top:1.2px;width:111px;height:54.4px;line-height:54.4px;text-align:center;font-weight:bold;font-size:18px;color:#333">用户等级</div><div style="position:absolute;left:590.5px;top:1.2px;width:69.20000000000005px;height:54.4px;line-height:54.4px;text-align:center;font-weight:bold;font-size:18px;color:#333">备注</div><div style="position:absolute;left:659.7px;top:1.2px;width:110.09999999999991px;height:54.4px;line-height:54.4px;text-align:center;font-weight:bold;font-size:18px;color:#333">指派订单</div><div style="position:absolute;left:769.8px;top:1.2px;width:111.40000000000009px;height:54.4px;line-height:54.4px;text-align:center;font-weight:bold;font-size:18px;color:#333">完成订单</div><div style="position:absolute;left:881.2px;top:1.2px;width:137.70000000000005px;height:54.4px;line-height:54.4px;text-align:center;font-weight:bold;font-size:18px;color:#333">可用余额</div><div style="position:absolute;left:1018.9000000000001px;top:1.2px;width:111.09999999999991px;height:54.4px;line-height:54.4px;text-align:center;font-weight:bold;font-size:18px;color:#333">冻结余额</div><div style="position:absolute;left:1130.0px;top:1.2px;width:163.0px;height:54.4px;line-height:54.4px;text-align:center;font-weight:bold;font-size:18px;color:#333">上级用户名</div><div style="position:absolute;left:1293.0px;top:1.2px;width:118.20000000000005px;height:54.4px;line-height:54.4px;text-align:center;font-weight:bold;font-size:18px;color:#333">邀请码</div><div style="position:absolute;left:1411.2px;top:1.2px;width:71.70000000000005px;height:54.4px;line-height:54.4px;text-align:center;font-weight:bold;font-size:18px;color:#333">提现</div><div style="position:absolute;left:1482.9px;top:1.2px;width:71.19999999999982px;height:54.4px;line-height:54.4px;text-align:center;font-weight:bold;font-size:18px;color:#333">冻结</div><div style="position:absolute;left:1554.1px;top:1.2px;width:111.40000000000009px;height:54.4px;line-height:54.4px;text-align:center;font-weight:bold;font-size:18px;color:#333">是否在线</div><div style="position:absolute;left:1671.5px;top:1.2px;width:221.69999999999982px;height:54.4px;line-height:54.4px;text-align:center;font-weight:bold;font-size:18px;color:#333">注册时间</div><div style="position:absolute;left:1867.5px;top:18.400000000000006px;"><svg width="12" height="20" viewBox="0 0 12 20" style=""><path d="M6 0 L12 8 L0 8 Z M6 20 L12 12 L0 12 Z" fill="#dcdcdc"/></svg></div><div style="position:absolute;left:0px;top:54.0px;width:1887.1999999999998px;height:1.2px;background:#dcdcdc"></div><div style="position:absolute;left:0px;top:55.4px;width:1887.1999999999998px;height:57.28px;background:#f9f9f9"></div><div style="position:absolute;left:15.6px;top:72.2px;width:13.1px;height:13.7px;border:1.3px solid #808080;border-radius:3px;background:#fff"></div><div style="position:absolute;left:77.60000000000002px;top:70.5px;width:77.7px;height:26.9px;background:#2c3e50;border-radius:3px;color:#fff;font-size:16px"><span style="position:absolute;left:7px;top:-1px;line-height:27px;font-size:15.5px">操作</span><span style="position:absolute;left:43.4px;top:0;width:1px;height:27px;background:#3b4b5b"></span><span style="position:absolute;left:55.4px;top:11px"><svg width="10.6" height="5.2" viewBox="0 0 11 6" style=""><path d="M0 0 L11 0 L5.5 6 Z" fill="#fff"/></svg></span></div><div style="position:absolute;left:160.0px;top:70.5px;width:59.5px;height:26.9px;background:#18bc9c;border-radius:3px;color:#fff;font-size:16px"><span style="position:absolute;left:7px;top:6px"><svg width="11.4" height="15" viewBox="0 0 11 15" style=""><path fill="#fff" d="M0 0.5 L11 0.5 L11 7.5 C11 11 8 13.5 5.5 14.8 C3 13.5 0 11 0 7.5 Z"/><path fill="#18bc9c" d="M5.5 2.3 L9.2 2.3 L9.2 7.5 C9.2 10 7.3 11.8 5.5 12.8 Z"/></svg></span><span style="position:absolute;left:22.8px;top:-0.5px;line-height:27px;font-size:15.5px">派单</span></div><div style="position:absolute;left:224.70000000000005px;top:70.5px;width:63.8px;height:26.9px;background:#e74c3c;border-radius:3px;color:#fff;font-size:16px"><span style="position:absolute;left:7.1px;top:4.9px"><svg width="16" height="14.7" viewBox="0 0 16 15" style=""><path fill="#fff" fill-rule="evenodd" d="M5 0 L11 0 L15.9 7.6 L13.3 14.7 L2.8 14.7 L0 7.6 Z M8 2.4 L12.7 10.3 L3.3 10.3 Z"/><g stroke="#e74c3c" stroke-width="1.5"><path d="M7.6 10 L7.6 15.5"/><path d="M5.9 5.6 L2.5 3.2"/><path d="M10.4 5.6 L13.8 3.2"/></g><path fill="#fff" d="M11 0 L14.3 2 L12.8 5.5 Z"/></svg></span><span style="position:absolute;left:26.4px;top:-0.5px;line-height:27px;font-size:15.5px">爆单</span></div><div style="position:absolute;left:317.5px;top:54.699999999999996px;width:162px;height:57.28px;line-height:57.28px;text-align:center;font-size:19px;color:#333"><span style="display:inline-block;transform:scaleX(0.92)">123123</span></div><div style="position:absolute;left:479.5px;top:54.699999999999996px;width:111px;height:57.28px;line-height:57.28px;text-align:center;font-size:19px;color:#333"><span style="display:inline-block;transform:scaleX(0.92)">Lv 1</span></div><div style="position:absolute;left:590.5px;top:54.699999999999996px;width:69.20000000000005px;height:57.28px;line-height:57.28px;text-align:center;font-size:19px;color:#333"><span style="display:inline-block;transform:scaleX(0.92)">-</span></div><div style="position:absolute;left:659.7px;top:54.699999999999996px;width:110.09999999999991px;height:57.28px;line-height:57.28px;text-align:center;font-size:19px;color:#333"><span style="display:inline-block;transform:scaleX(0.92)">-</span></div><div style="position:absolute;left:769.8px;top:54.699999999999996px;width:111.40000000000009px;height:57.28px;line-height:57.28px;text-align:center;font-size:19px;color:#333"><span style="display:inline-block;transform:scaleX(0.92)">0</span></div><div style="position:absolute;left:881.2px;top:54.699999999999996px;width:137.70000000000005px;height:57.28px;line-height:57.28px;text-align:center;font-size:19px;color:#333"><span style="display:inline-block;transform:scaleX(0.92)">9999999.00</span></div><div style="position:absolute;left:1018.9000000000001px;top:54.699999999999996px;width:111.09999999999991px;height:57.28px;line-height:57.28px;text-align:center;font-size:19px;color:#333"><span style="display:inline-block;transform:scaleX(0.92)">0.00</span></div><div style="position:absolute;left:1130.0px;top:54.699999999999996px;width:163.0px;height:57.28px;line-height:57.28px;text-align:center;font-size:19px;color:#333"><span style="display:inline-block;transform:scaleX(0.92)">111122223333</span></div><div style="position:absolute;left:1293.0px;top:54.699999999999996px;width:118.20000000000005px;height:57.28px;line-height:57.28px;text-align:center;font-size:19px;color:#333"><span style="display:inline-block;transform:scaleX(0.92)">EBP2GT</span></div><div style="position:absolute;left:1428.7px;top:70.7px;width:36.7px;height:22.9px;border-radius:12px;background:#ced4dd;box-sizing:border-box"><span style="position:absolute;left:2.5px;top:2.5px;width:17.8px;height:17.8px;border-radius:50%;background:#fff"></span></div><div style="position:absolute;left:1500.15px;top:70.7px;width:36.7px;height:22.9px;border-radius:12px;background:#ced4dd;box-sizing:border-box"><span style="position:absolute;left:2.5px;top:2.5px;width:17.8px;height:17.8px;border-radius:50%;background:#fff"></span></div><div style="position:absolute;left:1588.7px;top:75.2px;width:42.2px;height:20.4px;background:#18bc9c;border-radius:3px;color:#fff;font-weight:bold;font-size:13.3px;line-height:20.4px;text-align:center">离线</div><div style="position:absolute;left:1665.5px;top:54.699999999999996px;width:221.69999999999982px;height:57.28px;line-height:57.28px;text-align:center;font-size:19px;color:#333"><span style="display:inline-block;transform:scaleX(0.92)">2025-04-13 20:21:54</span></div><div style="position:absolute;left:0px;top:112.68px;width:1887.1999999999998px;height:57.28px;background:#fff"></div><div style="position:absolute;left:15.6px;top:129.48000000000002px;width:13.1px;height:13.7px;border:1.3px solid #808080;border-radius:3px;background:#fff"></div><div style="position:absolute;left:77.60000000000002px;top:127.78px;width:77.7px;height:26.9px;background:#2c3e50;border-radius:3px;color:#fff;font-size:16px"><span style="position:absolute;left:7px;top:-1px;line-height:27px;font-size:15.5px">操作</span><span style="position:absolute;left:43.4px;top:0;width:1px;height:27px;background:#3b4b5b"></span><span style="position:absolute;left:55.4px;top:11px"><svg width="10.6" height="5.2" viewBox="0 0 11 6" style=""><path d="M0 0 L11 0 L5.5 6 Z" fill="#fff"/></svg></span></div><div style="position:absolute;left:160.0px;top:127.78px;width:59.5px;height:26.9px;background:#18bc9c;border-radius:3px;color:#fff;font-size:16px"><span style="position:absolute;left:7px;top:6px"><svg width="11.4" height="15" viewBox="0 0 11 15" style=""><path fill="#fff" d="M0 0.5 L11 0.5 L11 7.5 C11 11 8 13.5 5.5 14.8 C3 13.5 0 11 0 7.5 Z"/><path fill="#18bc9c" d="M5.5 2.3 L9.2 2.3 L9.2 7.5 C9.2 10 7.3 11.8 5.5 12.8 Z"/></svg></span><span style="position:absolute;left:22.8px;top:-0.5px;line-height:27px;font-size:15.5px">派单</span></div><div style="position:absolute;left:224.70000000000005px;top:127.78px;width:63.8px;height:26.9px;background:#e74c3c;border-radius:3px;color:#fff;font-size:16px"><span style="position:absolute;left:7.1px;top:4.9px"><svg width="16" height="14.7" viewBox="0 0 16 15" style=""><path fill="#fff" fill-rule="evenodd" d="M5 0 L11 0 L15.9 7.6 L13.3 14.7 L2.8 14.7 L0 7.6 Z M8 2.4 L12.7 10.3 L3.3 10.3 Z"/><g stroke="#e74c3c" stroke-width="1.5"><path d="M7.6 10 L7.6 15.5"/><path d="M5.9 5.6 L2.5 3.2"/><path d="M10.4 5.6 L13.8 3.2"/></g><path fill="#fff" d="M11 0 L14.3 2 L12.8 5.5 Z"/></svg></span><span style="position:absolute;left:26.4px;top:-0.5px;line-height:27px;font-size:15.5px">爆单</span></div><div style="position:absolute;left:317.5px;top:111.98px;width:162px;height:57.28px;line-height:57.28px;text-align:center;font-size:19px;color:#333"><span style="display:inline-block;transform:scaleX(0.92)">111122223333</span></div><div style="position:absolute;left:479.5px;top:111.98px;width:111px;height:57.28px;line-height:57.28px;text-align:center;font-size:19px;color:#333"><span style="display:inline-block;transform:scaleX(0.92)">Lv 1</span></div><div style="position:absolute;left:590.5px;top:111.98px;width:69.20000000000005px;height:57.28px;line-height:57.28px;text-align:center;font-size:19px;color:#333"><span style="display:inline-block;transform:scaleX(0.92)">-</span></div><div style="position:absolute;left:659.7px;top:111.98px;width:110.09999999999991px;height:57.28px;line-height:57.28px;text-align:center;font-size:19px;color:#333"><span style="display:inline-block;transform:scaleX(0.92)">-</span></div><div style="position:absolute;left:769.8px;top:111.98px;width:111.40000000000009px;height:57.28px;line-height:57.28px;text-align:center;font-size:19px;color:#333"><span style="display:inline-block;transform:scaleX(0.92)">0</span></div><div style="position:absolute;left:881.2px;top:111.98px;width:137.70000000000005px;height:57.28px;line-height:57.28px;text-align:center;font-size:19px;color:#333"><span style="display:inline-block;transform:scaleX(0.92)">0.00</span></div><div style="position:absolute;left:1018.9000000000001px;top:111.98px;width:111.09999999999991px;height:57.28px;line-height:57.28px;text-align:center;font-size:19px;color:#333"><span style="display:inline-block;transform:scaleX(0.92)">0.00</span></div><div style="position:absolute;left:1130.0px;top:111.98px;width:163.0px;height:57.28px;line-height:57.28px;text-align:center;font-size:19px;color:#333"><span style="display:inline-block;transform:scaleX(0.92)">sky</span></div><div style="position:absolute;left:1293.0px;top:111.98px;width:118.20000000000005px;height:57.28px;line-height:57.28px;text-align:center;font-size:19px;color:#333"><span style="display:inline-block;transform:scaleX(0.92)">ES9VHQ</span></div><div style="position:absolute;left:1428.7px;top:127.98px;width:36.7px;height:22.9px;border-radius:12px;background:#ced4dd;box-sizing:border-box"><span style="position:absolute;left:2.5px;top:2.5px;width:17.8px;height:17.8px;border-radius:50%;background:#fff"></span></div><div style="position:absolute;left:1500.15px;top:127.98px;width:36.7px;height:22.9px;border-radius:12px;background:#ced4dd;box-sizing:border-box"><span style="position:absolute;left:2.5px;top:2.5px;width:17.8px;height:17.8px;border-radius:50%;background:#fff"></span></div><div style="position:absolute;left:1588.7px;top:132.48000000000002px;width:42.2px;height:20.4px;background:#18bc9c;border-radius:3px;color:#fff;font-weight:bold;font-size:13.3px;line-height:20.4px;text-align:center">离线</div><div style="position:absolute;left:1665.5px;top:111.98px;width:221.69999999999982px;height:57.28px;line-height:57.28px;text-align:center;font-size:19px;color:#333"><span style="display:inline-block;transform:scaleX(0.92)">2024-09-30 16:08:09</span></div><div style="position:absolute;left:0px;top:169.96px;width:1887.1999999999998px;height:57.28px;background:#f9f9f9"></div><div style="position:absolute;left:15.6px;top:186.76000000000002px;width:13.1px;height:13.7px;border:1.3px solid #808080;border-radius:3px;background:#fff"></div><div style="position:absolute;left:77.60000000000002px;top:185.06px;width:77.7px;height:26.9px;background:#2c3e50;border-radius:3px;color:#fff;font-size:16px"><span style="position:absolute;left:7px;top:-1px;line-height:27px;font-size:15.5px">操作</span><span style="position:absolute;left:43.4px;top:0;width:1px;height:27px;background:#3b4b5b"></span><span style="position:absolute;left:55.4px;top:11px"><svg width="10.6" height="5.2" viewBox="0 0 11 6" style=""><path d="M0 0 L11 0 L5.5 6 Z" fill="#fff"/></svg></span></div><div style="position:absolute;left:160.0px;top:185.06px;width:59.5px;height:26.9px;background:#18bc9c;border-radius:3px;color:#fff;font-size:16px"><span style="position:absolute;left:7px;top:6px"><svg width="11.4" height="15" viewBox="0 0 11 15" style=""><path fill="#fff" d="M0 0.5 L11 0.5 L11 7.5 C11 11 8 13.5 5.5 14.8 C3 13.5 0 11 0 7.5 Z"/><path fill="#18bc9c" d="M5.5 2.3 L9.2 2.3 L9.2 7.5 C9.2 10 7.3 11.8 5.5 12.8 Z"/></svg></span><span style="position:absolute;left:22.8px;top:-0.5px;line-height:27px;font-size:15.5px">派单</span></div><div style="position:absolute;left:224.70000000000005px;top:185.06px;width:63.8px;height:26.9px;background:#e74c3c;border-radius:3px;color:#fff;font-size:16px"><span style="position:absolute;left:7.1px;top:4.9px"><svg width="16" height="14.7" viewBox="0 0 16 15" style=""><path fill="#fff" fill-rule="evenodd" d="M5 0 L11 0 L15.9 7.6 L13.3 14.7 L2.8 14.7 L0 7.6 Z M8 2.4 L12.7 10.3 L3.3 10.3 Z"/><g stroke="#e74c3c" stroke-width="1.5"><path d="M7.6 10 L7.6 15.5"/><path d="M5.9 5.6 L2.5 3.2"/><path d="M10.4 5.6 L13.8 3.2"/></g><path fill="#fff" d="M11 0 L14.3 2 L12.8 5.5 Z"/></svg></span><span style="position:absolute;left:26.4px;top:-0.5px;line-height:27px;font-size:15.5px">爆单</span></div><div style="position:absolute;left:317.5px;top:169.26000000000002px;width:162px;height:57.28px;line-height:57.28px;text-align:center;font-size:19px;color:#333"><span style="display:inline-block;transform:scaleX(0.92)">qqqqqq</span></div><div style="position:absolute;left:479.5px;top:169.26000000000002px;width:111px;height:57.28px;line-height:57.28px;text-align:center;font-size:19px;color:#333"><span style="display:inline-block;transform:scaleX(0.92)">Lv 1</span></div><div style="position:absolute;left:590.5px;top:169.26000000000002px;width:69.20000000000005px;height:57.28px;line-height:57.28px;text-align:center;font-size:19px;color:#333"><span style="display:inline-block;transform:scaleX(0.92)">-</span></div><div style="position:absolute;left:659.7px;top:169.26000000000002px;width:110.09999999999991px;height:57.28px;line-height:57.28px;text-align:center;font-size:19px;color:#333"><span style="display:inline-block;transform:scaleX(0.92)">-</span></div><div style="position:absolute;left:769.8px;top:169.26000000000002px;width:111.40000000000009px;height:57.28px;line-height:57.28px;text-align:center;font-size:19px;color:#333"><span style="display:inline-block;transform:scaleX(0.92)">0</span></div><div style="position:absolute;left:881.2px;top:169.26000000000002px;width:137.70000000000005px;height:57.28px;line-height:57.28px;text-align:center;font-size:19px;color:#333"><span style="display:inline-block;transform:scaleX(0.92)">0.00</span></div><div style="position:absolute;left:1018.9000000000001px;top:169.26000000000002px;width:111.09999999999991px;height:57.28px;line-height:57.28px;text-align:center;font-size:19px;color:#333"><span style="display:inline-block;transform:scaleX(0.92)">0.00</span></div><div style="position:absolute;left:1130.0px;top:169.26000000000002px;width:163.0px;height:57.28px;line-height:57.28px;text-align:center;font-size:19px;color:#333"><span style="display:inline-block;transform:scaleX(0.92)">sky</span></div><div style="position:absolute;left:1293.0px;top:169.26000000000002px;width:118.20000000000005px;height:57.28px;line-height:57.28px;text-align:center;font-size:19px;color:#333"><span style="display:inline-block;transform:scaleX(0.92)">U8LNDK</span></div><div style="position:absolute;left:1428.7px;top:185.26000000000002px;width:36.7px;height:22.9px;border-radius:12px;background:#ced4dd;box-sizing:border-box"><span style="position:absolute;left:2.5px;top:2.5px;width:17.8px;height:17.8px;border-radius:50%;background:#fff"></span></div><div style="position:absolute;left:1500.15px;top:185.26000000000002px;width:36.7px;height:22.9px;border-radius:12px;background:#ced4dd;box-sizing:border-box"><span style="position:absolute;left:2.5px;top:2.5px;width:17.8px;height:17.8px;border-radius:50%;background:#fff"></span></div><div style="position:absolute;left:1588.7px;top:189.76000000000002px;width:42.2px;height:20.4px;background:#18bc9c;border-radius:3px;color:#fff;font-weight:bold;font-size:13.3px;line-height:20.4px;text-align:center">离线</div><div style="position:absolute;left:1665.5px;top:169.26000000000002px;width:221.69999999999982px;height:57.28px;line-height:57.28px;text-align:center;font-size:19px;color:#333"><span style="display:inline-block;transform:scaleX(0.92)">2024-09-30 11:19:55</span></div><div style="position:absolute;left:0px;top:227.24px;width:1887.1999999999998px;height:57.28px;background:#fff"></div><div style="position:absolute;left:15.6px;top:244.04000000000002px;width:13.1px;height:13.7px;border:1.3px solid #808080;border-radius:3px;background:#fff"></div><div style="position:absolute;left:77.60000000000002px;top:242.34px;width:77.7px;height:26.9px;background:#2c3e50;border-radius:3px;color:#fff;font-size:16px"><span style="position:absolute;left:7px;top:-1px;line-height:27px;font-size:15.5px">操作</span><span style="position:absolute;left:43.4px;top:0;width:1px;height:27px;background:#3b4b5b"></span><span style="position:absolute;left:55.4px;top:11px"><svg width="10.6" height="5.2" viewBox="0 0 11 6" style=""><path d="M0 0 L11 0 L5.5 6 Z" fill="#fff"/></svg></span></div><div style="position:absolute;left:160.0px;top:242.34px;width:59.5px;height:26.9px;background:#18bc9c;border-radius:3px;color:#fff;font-size:16px"><span style="position:absolute;left:7px;top:6px"><svg width="11.4" height="15" viewBox="0 0 11 15" style=""><path fill="#fff" d="M0 0.5 L11 0.5 L11 7.5 C11 11 8 13.5 5.5 14.8 C3 13.5 0 11 0 7.5 Z"/><path fill="#18bc9c" d="M5.5 2.3 L9.2 2.3 L9.2 7.5 C9.2 10 7.3 11.8 5.5 12.8 Z"/></svg></span><span style="position:absolute;left:22.8px;top:-0.5px;line-height:27px;font-size:15.5px">派单</span></div><div style="position:absolute;left:224.70000000000005px;top:242.34px;width:63.8px;height:26.9px;background:#e74c3c;border-radius:3px;color:#fff;font-size:16px"><span style="position:absolute;left:7.1px;top:4.9px"><svg width="16" height="14.7" viewBox="0 0 16 15" style=""><path fill="#fff" fill-rule="evenodd" d="M5 0 L11 0 L15.9 7.6 L13.3 14.7 L2.8 14.7 L0 7.6 Z M8 2.4 L12.7 10.3 L3.3 10.3 Z"/><g stroke="#e74c3c" stroke-width="1.5"><path d="M7.6 10 L7.6 15.5"/><path d="M5.9 5.6 L2.5 3.2"/><path d="M10.4 5.6 L13.8 3.2"/></g><path fill="#fff" d="M11 0 L14.3 2 L12.8 5.5 Z"/></svg></span><span style="position:absolute;left:26.4px;top:-0.5px;line-height:27px;font-size:15.5px">爆单</span></div><div style="position:absolute;left:317.5px;top:226.54000000000002px;width:162px;height:57.28px;line-height:57.28px;text-align:center;font-size:19px;color:#333"><span style="display:inline-block;transform:scaleX(0.92)">19696969696</span></div><div style="position:absolute;left:479.5px;top:226.54000000000002px;width:111px;height:57.28px;line-height:57.28px;text-align:center;font-size:19px;color:#333"><span style="display:inline-block;transform:scaleX(0.92)">Lv 1</span></div><div style="position:absolute;left:590.5px;top:226.54000000000002px;width:69.20000000000005px;height:57.28px;line-height:57.28px;text-align:center;font-size:19px;color:#333"><span style="display:inline-block;transform:scaleX(0.92)">-</span></div><div style="position:absolute;left:659.7px;top:226.54000000000002px;width:110.09999999999991px;height:57.28px;line-height:57.28px;text-align:center;font-size:19px;color:#333"><span style="display:inline-block;transform:scaleX(0.92)">-</span></div><div style="position:absolute;left:769.8px;top:226.54000000000002px;width:111.40000000000009px;height:57.28px;line-height:57.28px;text-align:center;font-size:19px;color:#333"><span style="display:inline-block;transform:scaleX(0.92)">0</span></div><div style="position:absolute;left:881.2px;top:226.54000000000002px;width:137.70000000000005px;height:57.28px;line-height:57.28px;text-align:center;font-size:19px;color:#333"><span style="display:inline-block;transform:scaleX(0.92)">0.00</span></div><div style="position:absolute;left:1018.9000000000001px;top:226.54000000000002px;width:111.09999999999991px;height:57.28px;line-height:57.28px;text-align:center;font-size:19px;color:#333"><span style="display:inline-block;transform:scaleX(0.92)">0.00</span></div><div style="position:absolute;left:1130.0px;top:226.54000000000002px;width:163.0px;height:57.28px;line-height:57.28px;text-align:center;font-size:19px;color:#333"><span style="display:inline-block;transform:scaleX(0.92)">sky</span></div><div style="position:absolute;left:1293.0px;top:226.54000000000002px;width:118.20000000000005px;height:57.28px;line-height:57.28px;text-align:center;font-size:19px;color:#333"><span style="display:inline-block;transform:scaleX(0.92)">RN8XTA</span></div><div style="position:absolute;left:1428.7px;top:242.54000000000002px;width:36.7px;height:22.9px;border-radius:12px;background:#ced4dd;box-sizing:border-box"><span style="position:absolute;left:2.5px;top:2.5px;width:17.8px;height:17.8px;border-radius:50%;background:#fff"></span></div><div style="position:absolute;left:1500.15px;top:242.54000000000002px;width:36.7px;height:22.9px;border-radius:12px;background:#ced4dd;box-sizing:border-box"><span style="position:absolute;left:2.5px;top:2.5px;width:17.8px;height:17.8px;border-radius:50%;background:#fff"></span></div><div style="position:absolute;left:1588.7px;top:247.04000000000002px;width:42.2px;height:20.4px;background:#18bc9c;border-radius:3px;color:#fff;font-weight:bold;font-size:13.3px;line-height:20.4px;text-align:center">离线</div><div style="position:absolute;left:1665.5px;top:226.54000000000002px;width:221.69999999999982px;height:57.28px;line-height:57.28px;text-align:center;font-size:19px;color:#333"><span style="display:inline-block;transform:scaleX(0.92)">2024-09-30 11:14:49</span></div><div style="position:absolute;left:0px;top:284.52px;width:1887.1999999999998px;height:57.28px;background:#f9f9f9"></div><div style="position:absolute;left:15.6px;top:301.32px;width:13.1px;height:13.7px;border:1.3px solid #808080;border-radius:3px;background:#fff"></div><div style="position:absolute;left:77.60000000000002px;top:299.62px;width:77.7px;height:26.9px;background:#2c3e50;border-radius:3px;color:#fff;font-size:16px"><span style="position:absolute;left:7px;top:-1px;line-height:27px;font-size:15.5px">操作</span><span style="position:absolute;left:43.4px;top:0;width:1px;height:27px;background:#3b4b5b"></span><span style="position:absolute;left:55.4px;top:11px"><svg width="10.6" height="5.2" viewBox="0 0 11 6" style=""><path d="M0 0 L11 0 L5.5 6 Z" fill="#fff"/></svg></span></div><div style="position:absolute;left:160.0px;top:299.62px;width:59.5px;height:26.9px;background:#18bc9c;border-radius:3px;color:#fff;font-size:16px"><span style="position:absolute;left:7px;top:6px"><svg width="11.4" height="15" viewBox="0 0 11 15" style=""><path fill="#fff" d="M0 0.5 L11 0.5 L11 7.5 C11 11 8 13.5 5.5 14.8 C3 13.5 0 11 0 7.5 Z"/><path fill="#18bc9c" d="M5.5 2.3 L9.2 2.3 L9.2 7.5 C9.2 10 7.3 11.8 5.5 12.8 Z"/></svg></span><span style="position:absolute;left:22.8px;top:-0.5px;line-height:27px;font-size:15.5px">派单</span></div><div style="position:absolute;left:224.70000000000005px;top:299.62px;width:63.8px;height:26.9px;background:#e74c3c;border-radius:3px;color:#fff;font-size:16px"><span style="position:absolute;left:7.1px;top:4.9px"><svg width="16" height="14.7" viewBox="0 0 16 15" style=""><path fill="#fff" fill-rule="evenodd" d="M5 0 L11 0 L15.9 7.6 L13.3 14.7 L2.8 14.7 L0 7.6 Z M8 2.4 L12.7 10.3 L3.3 10.3 Z"/><g stroke="#e74c3c" stroke-width="1.5"><path d="M7.6 10 L7.6 15.5"/><path d="M5.9 5.6 L2.5 3.2"/><path d="M10.4 5.6 L13.8 3.2"/></g><path fill="#fff" d="M11 0 L14.3 2 L12.8 5.5 Z"/></svg></span><span style="position:absolute;left:26.4px;top:-0.5px;line-height:27px;font-size:15.5px">爆单</span></div><div style="position:absolute;left:317.5px;top:283.82px;width:162px;height:57.28px;line-height:57.28px;text-align:center;font-size:19px;color:#333"><span style="display:inline-block;transform:scaleX(0.92)">17474747474</span></div><div style="position:absolute;left:479.5px;top:283.82px;width:111px;height:57.28px;line-height:57.28px;text-align:center;font-size:19px;color:#333"><span style="display:inline-block;transform:scaleX(0.92)">Lv 1</span></div><div style="position:absolute;left:590.5px;top:283.82px;width:69.20000000000005px;height:57.28px;line-height:57.28px;text-align:center;font-size:19px;color:#333"><span style="display:inline-block;transform:scaleX(0.92)">-</span></div><div style="position:absolute;left:659.7px;top:283.82px;width:110.09999999999991px;height:57.28px;line-height:57.28px;text-align:center;font-size:19px;color:#333"><span style="display:inline-block;transform:scaleX(0.92)">-</span></div><div style="position:absolute;left:769.8px;top:283.82px;width:111.40000000000009px;height:57.28px;line-height:57.28px;text-align:center;font-size:19px;color:#333"><span style="display:inline-block;transform:scaleX(0.92)">0</span></div><div style="position:absolute;left:881.2px;top:283.82px;width:137.70000000000005px;height:57.28px;line-height:57.28px;text-align:center;font-size:19px;color:#333"><span style="display:inline-block;transform:scaleX(0.92)">0.00</span></div><div style="position:absolute;left:1018.9000000000001px;top:283.82px;width:111.09999999999991px;height:57.28px;line-height:57.28px;text-align:center;font-size:19px;color:#333"><span style="display:inline-block;transform:scaleX(0.92)">0.00</span></div><div style="position:absolute;left:1130.0px;top:283.82px;width:163.0px;height:57.28px;line-height:57.28px;text-align:center;font-size:19px;color:#333"><span style="display:inline-block;transform:scaleX(0.92)">sky</span></div><div style="position:absolute;left:1293.0px;top:283.82px;width:118.20000000000005px;height:57.28px;line-height:57.28px;text-align:center;font-size:19px;color:#333"><span style="display:inline-block;transform:scaleX(0.92)">NLUGCF</span></div><div style="position:absolute;left:1428.7px;top:299.82px;width:36.7px;height:22.9px;border-radius:12px;background:#ced4dd;box-sizing:border-box"><span style="position:absolute;left:2.5px;top:2.5px;width:17.8px;height:17.8px;border-radius:50%;background:#fff"></span></div><div style="position:absolute;left:1500.15px;top:299.82px;width:36.7px;height:22.9px;border-radius:12px;background:#ced4dd;box-sizing:border-box"><span style="position:absolute;left:2.5px;top:2.5px;width:17.8px;height:17.8px;border-radius:50%;background:#fff"></span></div><div style="position:absolute;left:1588.7px;top:304.32px;width:42.2px;height:20.4px;background:#18bc9c;border-radius:3px;color:#fff;font-weight:bold;font-size:13.3px;line-height:20.4px;text-align:center">离线</div><div style="position:absolute;left:1665.5px;top:283.82px;width:221.69999999999982px;height:57.28px;line-height:57.28px;text-align:center;font-size:19px;color:#333"><span style="display:inline-block;transform:scaleX(0.92)">2024-09-30 11:14:22</span></div><div style="position:absolute;left:0px;top:341.79999999999995px;width:1887.1999999999998px;height:57.28px;background:#fff"></div><div style="position:absolute;left:15.6px;top:358.59999999999997px;width:13.1px;height:13.7px;border:1.3px solid #808080;border-radius:3px;background:#fff"></div><div style="position:absolute;left:77.60000000000002px;top:356.9px;width:77.7px;height:26.9px;background:#2c3e50;border-radius:3px;color:#fff;font-size:16px"><span style="position:absolute;left:7px;top:-1px;line-height:27px;font-size:15.5px">操作</span><span style="position:absolute;left:43.4px;top:0;width:1px;height:27px;background:#3b4b5b"></span><span style="position:absolute;left:55.4px;top:11px"><svg width="10.6" height="5.2" viewBox="0 0 11 6" style=""><path d="M0 0 L11 0 L5.5 6 Z" fill="#fff"/></svg></span></div><div style="position:absolute;left:160.0px;top:356.9px;width:59.5px;height:26.9px;background:#18bc9c;border-radius:3px;color:#fff;font-size:16px"><span style="position:absolute;left:7px;top:6px"><svg width="11.4" height="15" viewBox="0 0 11 15" style=""><path fill="#fff" d="M0 0.5 L11 0.5 L11 7.5 C11 11 8 13.5 5.5 14.8 C3 13.5 0 11 0 7.5 Z"/><path fill="#18bc9c" d="M5.5 2.3 L9.2 2.3 L9.2 7.5 C9.2 10 7.3 11.8 5.5 12.8 Z"/></svg></span><span style="position:absolute;left:22.8px;top:-0.5px;line-height:27px;font-size:15.5px">派单</span></div><div style="position:absolute;left:224.70000000000005px;top:356.9px;width:63.8px;height:26.9px;background:#e74c3c;border-radius:3px;color:#fff;font-size:16px"><span style="position:absolute;left:7.1px;top:4.9px"><svg width="16" height="14.7" viewBox="0 0 16 15" style=""><path fill="#fff" fill-rule="evenodd" d="M5 0 L11 0 L15.9 7.6 L13.3 14.7 L2.8 14.7 L0 7.6 Z M8 2.4 L12.7 10.3 L3.3 10.3 Z"/><g stroke="#e74c3c" stroke-width="1.5"><path d="M7.6 10 L7.6 15.5"/><path d="M5.9 5.6 L2.5 3.2"/><path d="M10.4 5.6 L13.8 3.2"/></g><path fill="#fff" d="M11 0 L14.3 2 L12.8 5.5 Z"/></svg></span><span style="position:absolute;left:26.4px;top:-0.5px;line-height:27px;font-size:15.5px">爆单</span></div><div style="position:absolute;left:317.5px;top:341.09999999999997px;width:162px;height:57.28px;line-height:57.28px;text-align:center;font-size:19px;color:#333"><span style="display:inline-block;transform:scaleX(0.92)">18585858585</span></div><div style="position:absolute;left:479.5px;top:341.09999999999997px;width:111px;height:57.28px;line-height:57.28px;text-align:center;font-size:19px;color:#333"><span style="display:inline-block;transform:scaleX(0.92)">Lv 1</span></div><div style="position:absolute;left:590.5px;top:341.09999999999997px;width:69.20000000000005px;height:57.28px;line-height:57.28px;text-align:center;font-size:19px;color:#333"><span style="display:inline-block;transform:scaleX(0.92)">-</span></div><div style="position:absolute;left:659.7px;top:341.09999999999997px;width:110.09999999999991px;height:57.28px;line-height:57.28px;text-align:center;font-size:19px;color:#333"><span style="display:inline-block;transform:scaleX(0.92)">-</span></div><div style="position:absolute;left:769.8px;top:341.09999999999997px;width:111.40000000000009px;height:57.28px;line-height:57.28px;text-align:center;font-size:19px;color:#333"><span style="display:inline-block;transform:scaleX(0.92)">0</span></div><div style="position:absolute;left:881.2px;top:341.09999999999997px;width:137.70000000000005px;height:57.28px;line-height:57.28px;text-align:center;font-size:19px;color:#333"><span style="display:inline-block;transform:scaleX(0.92)">0.00</span></div><div style="position:absolute;left:1018.9000000000001px;top:341.09999999999997px;width:111.09999999999991px;height:57.28px;line-height:57.28px;text-align:center;font-size:19px;color:#333"><span style="display:inline-block;transform:scaleX(0.92)">0.00</span></div><div style="position:absolute;left:1130.0px;top:341.09999999999997px;width:163.0px;height:57.28px;line-height:57.28px;text-align:center;font-size:19px;color:#333"><span style="display:inline-block;transform:scaleX(0.92)">sky</span></div><div style="position:absolute;left:1293.0px;top:341.09999999999997px;width:118.20000000000005px;height:57.28px;line-height:57.28px;text-align:center;font-size:19px;color:#333"><span style="display:inline-block;transform:scaleX(0.92)">B9DH52</span></div><div style="position:absolute;left:1428.7px;top:357.09999999999997px;width:36.7px;height:22.9px;border-radius:12px;background:#ced4dd;box-sizing:border-box"><span style="position:absolute;left:2.5px;top:2.5px;width:17.8px;height:17.8px;border-radius:50%;background:#fff"></span></div><div style="position:absolute;left:1500.15px;top:357.09999999999997px;width:36.7px;height:22.9px;border-radius:12px;background:#ced4dd;box-sizing:border-box"><span style="position:absolute;left:2.5px;top:2.5px;width:17.8px;height:17.8px;border-radius:50%;background:#fff"></span></div><div style="position:absolute;left:1588.7px;top:361.59999999999997px;width:42.2px;height:20.4px;background:#18bc9c;border-radius:3px;color:#fff;font-weight:bold;font-size:13.3px;line-height:20.4px;text-align:center">离线</div><div style="position:absolute;left:1665.5px;top:341.09999999999997px;width:221.69999999999982px;height:57.28px;line-height:57.28px;text-align:center;font-size:19px;color:#333"><span style="display:inline-block;transform:scaleX(0.92)">2024-09-30 11:13:38</span></div><div style="position:absolute;left:0px;top:399.08px;width:1887.1999999999998px;height:57.28px;background:#f9f9f9"></div><div style="position:absolute;left:15.6px;top:415.88px;width:13.1px;height:13.7px;border:1.3px solid #808080;border-radius:3px;background:#fff"></div><div style="position:absolute;left:77.60000000000002px;top:414.18px;width:77.7px;height:26.9px;background:#2c3e50;border-radius:3px;color:#fff;font-size:16px"><span style="position:absolute;left:7px;top:-1px;line-height:27px;font-size:15.5px">操作</span><span style="position:absolute;left:43.4px;top:0;width:1px;height:27px;background:#3b4b5b"></span><span style="position:absolute;left:55.4px;top:11px"><svg width="10.6" height="5.2" viewBox="0 0 11 6" style=""><path d="M0 0 L11 0 L5.5 6 Z" fill="#fff"/></svg></span></div><div style="position:absolute;left:160.0px;top:414.18px;width:59.5px;height:26.9px;background:#18bc9c;border-radius:3px;color:#fff;font-size:16px"><span style="position:absolute;left:7px;top:6px"><svg width="11.4" height="15" viewBox="0 0 11 15" style=""><path fill="#fff" d="M0 0.5 L11 0.5 L11 7.5 C11 11 8 13.5 5.5 14.8 C3 13.5 0 11 0 7.5 Z"/><path fill="#18bc9c" d="M5.5 2.3 L9.2 2.3 L9.2 7.5 C9.2 10 7.3 11.8 5.5 12.8 Z"/></svg></span><span style="position:absolute;left:22.8px;top:-0.5px;line-height:27px;font-size:15.5px">派单</span></div><div style="position:absolute;left:224.70000000000005px;top:414.18px;width:63.8px;height:26.9px;background:#e74c3c;border-radius:3px;color:#fff;font-size:16px"><span style="position:absolute;left:7.1px;top:4.9px"><svg width="16" height="14.7" viewBox="0 0 16 15" style=""><path fill="#fff" fill-rule="evenodd" d="M5 0 L11 0 L15.9 7.6 L13.3 14.7 L2.8 14.7 L0 7.6 Z M8 2.4 L12.7 10.3 L3.3 10.3 Z"/><g stroke="#e74c3c" stroke-width="1.5"><path d="M7.6 10 L7.6 15.5"/><path d="M5.9 5.6 L2.5 3.2"/><path d="M10.4 5.6 L13.8 3.2"/></g><path fill="#fff" d="M11 0 L14.3 2 L12.8 5.5 Z"/></svg></span><span style="position:absolute;left:26.4px;top:-0.5px;line-height:27px;font-size:15.5px">爆单</span></div><div style="position:absolute;left:317.5px;top:398.38px;width:162px;height:57.28px;line-height:57.28px;text-align:center;font-size:19px;color:#333"><span style="display:inline-block;transform:scaleX(0.92)">123456</span></div><div style="position:absolute;left:479.5px;top:398.38px;width:111px;height:57.28px;line-height:57.28px;text-align:center;font-size:19px;color:#333"><span style="display:inline-block;transform:scaleX(0.92)">Lv 1</span></div><div style="position:absolute;left:590.5px;top:398.38px;width:69.20000000000005px;height:57.28px;line-height:57.28px;text-align:center;font-size:19px;color:#333"><span style="display:inline-block;transform:scaleX(0.92)">-</span></div><div style="position:absolute;left:659.7px;top:398.38px;width:110.09999999999991px;height:57.28px;line-height:57.28px;text-align:center;font-size:19px;color:#333"><span style="display:inline-block;transform:scaleX(0.92)">-</span></div><div style="position:absolute;left:769.8px;top:398.38px;width:111.40000000000009px;height:57.28px;line-height:57.28px;text-align:center;font-size:19px;color:#333"><span style="display:inline-block;transform:scaleX(0.92)">0</span></div><div style="position:absolute;left:881.2px;top:398.38px;width:137.70000000000005px;height:57.28px;line-height:57.28px;text-align:center;font-size:19px;color:#333"><span style="display:inline-block;transform:scaleX(0.92)">0.00</span></div><div style="position:absolute;left:1018.9000000000001px;top:398.38px;width:111.09999999999991px;height:57.28px;line-height:57.28px;text-align:center;font-size:19px;color:#333"><span style="display:inline-block;transform:scaleX(0.92)">0.00</span></div><div style="position:absolute;left:1130.0px;top:398.38px;width:163.0px;height:57.28px;line-height:57.28px;text-align:center;font-size:19px;color:#333"><span style="display:inline-block;transform:scaleX(0.92)">-</span></div><div style="position:absolute;left:1293.0px;top:398.38px;width:118.20000000000005px;height:57.28px;line-height:57.28px;text-align:center;font-size:19px;color:#333"><span style="display:inline-block;transform:scaleX(0.92)">ECPNX3</span></div><div style="position:absolute;left:1428.7px;top:414.38px;width:36.7px;height:22.9px;border-radius:12px;background:#ced4dd;box-sizing:border-box"><span style="position:absolute;left:2.5px;top:2.5px;width:17.8px;height:17.8px;border-radius:50%;background:#fff"></span></div><div style="position:absolute;left:1500.15px;top:414.38px;width:36.7px;height:22.9px;border-radius:12px;background:#ced4dd;box-sizing:border-box"><span style="position:absolute;left:2.5px;top:2.5px;width:17.8px;height:17.8px;border-radius:50%;background:#fff"></span></div><div style="position:absolute;left:1588.7px;top:418.88px;width:42.2px;height:20.4px;background:#18bc9c;border-radius:3px;color:#fff;font-weight:bold;font-size:13.3px;line-height:20.4px;text-align:center">离线</div><div style="position:absolute;left:1665.5px;top:398.38px;width:221.69999999999982px;height:57.28px;line-height:57.28px;text-align:center;font-size:19px;color:#333"><span style="display:inline-block;transform:scaleX(0.92)">2024-09-19 14:45:32</span></div><div style="position:absolute;left:0px;top:456.36px;width:1887.1999999999998px;height:57.28px;background:#fff"></div><div style="position:absolute;left:15.6px;top:473.16px;width:13.1px;height:13.7px;border:1.3px solid #808080;border-radius:3px;background:#fff"></div><div style="position:absolute;left:77.60000000000002px;top:471.46000000000004px;width:77.7px;height:26.9px;background:#2c3e50;border-radius:3px;color:#fff;font-size:16px"><span style="position:absolute;left:7px;top:-1px;line-height:27px;font-size:15.5px">操作</span><span style="position:absolute;left:43.4px;top:0;width:1px;height:27px;background:#3b4b5b"></span><span style="position:absolute;left:55.4px;top:11px"><svg width="10.6" height="5.2" viewBox="0 0 11 6" style=""><path d="M0 0 L11 0 L5.5 6 Z" fill="#fff"/></svg></span></div><div style="position:absolute;left:160.0px;top:471.46000000000004px;width:59.5px;height:26.9px;background:#18bc9c;border-radius:3px;color:#fff;font-size:16px"><span style="position:absolute;left:7px;top:6px"><svg width="11.4" height="15" viewBox="0 0 11 15" style=""><path fill="#fff" d="M0 0.5 L11 0.5 L11 7.5 C11 11 8 13.5 5.5 14.8 C3 13.5 0 11 0 7.5 Z"/><path fill="#18bc9c" d="M5.5 2.3 L9.2 2.3 L9.2 7.5 C9.2 10 7.3 11.8 5.5 12.8 Z"/></svg></span><span style="position:absolute;left:22.8px;top:-0.5px;line-height:27px;font-size:15.5px">派单</span></div><div style="position:absolute;left:224.70000000000005px;top:471.46000000000004px;width:63.8px;height:26.9px;background:#e74c3c;border-radius:3px;color:#fff;font-size:16px"><span style="position:absolute;left:7.1px;top:4.9px"><svg width="16" height="14.7" viewBox="0 0 16 15" style=""><path fill="#fff" fill-rule="evenodd" d="M5 0 L11 0 L15.9 7.6 L13.3 14.7 L2.8 14.7 L0 7.6 Z M8 2.4 L12.7 10.3 L3.3 10.3 Z"/><g stroke="#e74c3c" stroke-width="1.5"><path d="M7.6 10 L7.6 15.5"/><path d="M5.9 5.6 L2.5 3.2"/><path d="M10.4 5.6 L13.8 3.2"/></g><path fill="#fff" d="M11 0 L14.3 2 L12.8 5.5 Z"/></svg></span><span style="position:absolute;left:26.4px;top:-0.5px;line-height:27px;font-size:15.5px">爆单</span></div><div style="position:absolute;left:317.5px;top:455.66px;width:162px;height:57.28px;line-height:57.28px;text-align:center;font-size:19px;color:#333"><span style="display:inline-block;transform:scaleX(0.92)">001233</span></div><div style="position:absolute;left:479.5px;top:455.66px;width:111px;height:57.28px;line-height:57.28px;text-align:center;font-size:19px;color:#333"><span style="display:inline-block;transform:scaleX(0.92)">Lv 1</span></div><div style="position:absolute;left:590.5px;top:455.66px;width:69.20000000000005px;height:57.28px;line-height:57.28px;text-align:center;font-size:19px;color:#333"><span style="display:inline-block;transform:scaleX(0.92)">-</span></div><div style="position:absolute;left:659.7px;top:455.66px;width:110.09999999999991px;height:57.28px;line-height:57.28px;text-align:center;font-size:19px;color:#333"><span style="display:inline-block;transform:scaleX(0.92)">-</span></div><div style="position:absolute;left:769.8px;top:455.66px;width:111.40000000000009px;height:57.28px;line-height:57.28px;text-align:center;font-size:19px;color:#333"><span style="display:inline-block;transform:scaleX(0.92)">40</span></div><div style="position:absolute;left:881.2px;top:455.66px;width:137.70000000000005px;height:57.28px;line-height:57.28px;text-align:center;font-size:19px;color:#333"><span style="display:inline-block;transform:scaleX(0.92)">630.10</span></div><div style="position:absolute;left:1018.9000000000001px;top:455.66px;width:111.09999999999991px;height:57.28px;line-height:57.28px;text-align:center;font-size:19px;color:#333"><span style="display:inline-block;transform:scaleX(0.92)">0.00</span></div><div style="position:absolute;left:1130.0px;top:455.66px;width:163.0px;height:57.28px;line-height:57.28px;text-align:center;font-size:19px;color:#333"><span style="display:inline-block;transform:scaleX(0.92)">000122</span></div><div style="position:absolute;left:1293.0px;top:455.66px;width:118.20000000000005px;height:57.28px;line-height:57.28px;text-align:center;font-size:19px;color:#333"><span style="display:inline-block;transform:scaleX(0.92)">TD8WZA</span></div><div style="position:absolute;left:1428.7px;top:471.66px;width:36.7px;height:22.9px;border-radius:12px;background:#ced4dd;box-sizing:border-box"><span style="position:absolute;left:2.5px;top:2.5px;width:17.8px;height:17.8px;border-radius:50%;background:#fff"></span></div><div style="position:absolute;left:1500.15px;top:471.66px;width:36.7px;height:22.9px;border-radius:12px;background:#ced4dd;box-sizing:border-box"><span style="position:absolute;left:2.5px;top:2.5px;width:17.8px;height:17.8px;border-radius:50%;background:#fff"></span></div><div style="position:absolute;left:1588.7px;top:476.16px;width:42.2px;height:20.4px;background:#18bc9c;border-radius:3px;color:#fff;font-weight:bold;font-size:13.3px;line-height:20.4px;text-align:center">离线</div><div style="position:absolute;left:1665.5px;top:455.66px;width:221.69999999999982px;height:57.28px;line-height:57.28px;text-align:center;font-size:19px;color:#333"><span style="display:inline-block;transform:scaleX(0.92)">2024-09-14 18:08:33</span></div><div style="position:absolute;left:0px;top:513.64px;width:1887.1999999999998px;height:57.28px;background:#f9f9f9"></div><div style="position:absolute;left:15.6px;top:530.4399999999999px;width:13.1px;height:13.7px;border:1.3px solid #808080;border-radius:3px;background:#fff"></div><div style="position:absolute;left:77.60000000000002px;top:528.74px;width:77.7px;height:26.9px;background:#2c3e50;border-radius:3px;color:#fff;font-size:16px"><span style="position:absolute;left:7px;top:-1px;line-height:27px;font-size:15.5px">操作</span><span style="position:absolute;left:43.4px;top:0;width:1px;height:27px;background:#3b4b5b"></span><span style="position:absolute;left:55.4px;top:11px"><svg width="10.6" height="5.2" viewBox="0 0 11 6" style=""><path d="M0 0 L11 0 L5.5 6 Z" fill="#fff"/></svg></span></div><div style="position:absolute;left:160.0px;top:528.74px;width:59.5px;height:26.9px;background:#18bc9c;border-radius:3px;color:#fff;font-size:16px"><span style="position:absolute;left:7px;top:6px"><svg width="11.4" height="15" viewBox="0 0 11 15" style=""><path fill="#fff" d="M0 0.5 L11 0.5 L11 7.5 C11 11 8 13.5 5.5 14.8 C3 13.5 0 11 0 7.5 Z"/><path fill="#18bc9c" d="M5.5 2.3 L9.2 2.3 L9.2 7.5 C9.2 10 7.3 11.8 5.5 12.8 Z"/></svg></span><span style="position:absolute;left:22.8px;top:-0.5px;line-height:27px;font-size:15.5px">派单</span></div><div style="position:absolute;left:224.70000000000005px;top:528.74px;width:63.8px;height:26.9px;background:#e74c3c;border-radius:3px;color:#fff;font-size:16px"><span style="position:absolute;left:7.1px;top:4.9px"><svg width="16" height="14.7" viewBox="0 0 16 15" style=""><path fill="#fff" fill-rule="evenodd" d="M5 0 L11 0 L15.9 7.6 L13.3 14.7 L2.8 14.7 L0 7.6 Z M8 2.4 L12.7 10.3 L3.3 10.3 Z"/><g stroke="#e74c3c" stroke-width="1.5"><path d="M7.6 10 L7.6 15.5"/><path d="M5.9 5.6 L2.5 3.2"/><path d="M10.4 5.6 L13.8 3.2"/></g><path fill="#fff" d="M11 0 L14.3 2 L12.8 5.5 Z"/></svg></span><span style="position:absolute;left:26.4px;top:-0.5px;line-height:27px;font-size:15.5px">爆单</span></div><div style="position:absolute;left:317.5px;top:512.9399999999999px;width:162px;height:57.28px;line-height:57.28px;text-align:center;font-size:19px;color:#333"><span style="display:inline-block;transform:scaleX(0.92)">000122</span></div><div style="position:absolute;left:479.5px;top:512.9399999999999px;width:111px;height:57.28px;line-height:57.28px;text-align:center;font-size:19px;color:#333"><span style="display:inline-block;transform:scaleX(0.92)">Lv 1</span></div><div style="position:absolute;left:590.5px;top:512.9399999999999px;width:69.20000000000005px;height:57.28px;line-height:57.28px;text-align:center;font-size:19px;color:#333"><span style="display:inline-block;transform:scaleX(0.92)">-</span></div><div style="position:absolute;left:659.7px;top:512.9399999999999px;width:110.09999999999991px;height:57.28px;line-height:57.28px;text-align:center;font-size:19px;color:#333"><span style="display:inline-block;transform:scaleX(0.92)">-</span></div><div style="position:absolute;left:769.8px;top:512.9399999999999px;width:111.40000000000009px;height:57.28px;line-height:57.28px;text-align:center;font-size:19px;color:#333"><span style="display:inline-block;transform:scaleX(0.92)">40</span></div><div style="position:absolute;left:881.2px;top:512.9399999999999px;width:137.70000000000005px;height:57.28px;line-height:57.28px;text-align:center;font-size:19px;color:#333"><span style="display:inline-block;transform:scaleX(0.92)">15.99</span></div><div style="position:absolute;left:1018.9000000000001px;top:512.9399999999999px;width:111.09999999999991px;height:57.28px;line-height:57.28px;text-align:center;font-size:19px;color:#333"><span style="display:inline-block;transform:scaleX(0.92)">0.00</span></div><div style="position:absolute;left:1130.0px;top:512.9399999999999px;width:163.0px;height:57.28px;line-height:57.28px;text-align:center;font-size:19px;color:#333"><span style="display:inline-block;transform:scaleX(0.92)">09988778899</span></div><div style="position:absolute;left:1293.0px;top:512.9399999999999px;width:118.20000000000005px;height:57.28px;line-height:57.28px;text-align:center;font-size:19px;color:#333"><span style="display:inline-block;transform:scaleX(0.92)">G5UHYL</span></div><div style="position:absolute;left:1428.7px;top:528.9399999999999px;width:36.7px;height:22.9px;border-radius:12px;background:#ced4dd;box-sizing:border-box"><span style="position:absolute;left:2.5px;top:2.5px;width:17.8px;height:17.8px;border-radius:50%;background:#fff"></span></div><div style="position:absolute;left:1500.15px;top:528.9399999999999px;width:36.7px;height:22.9px;border-radius:12px;background:#ced4dd;box-sizing:border-box"><span style="position:absolute;left:2.5px;top:2.5px;width:17.8px;height:17.8px;border-radius:50%;background:#fff"></span></div><div style="position:absolute;left:1588.7px;top:533.4399999999999px;width:42.2px;height:20.4px;background:#18bc9c;border-radius:3px;color:#fff;font-weight:bold;font-size:13.3px;line-height:20.4px;text-align:center">离线</div><div style="position:absolute;left:1665.5px;top:512.9399999999999px;width:221.69999999999982px;height:57.28px;line-height:57.28px;text-align:center;font-size:19px;color:#333"><span style="display:inline-block;transform:scaleX(0.92)">2024-09-14 18:08:07</span></div><div style="position:absolute;left:0px;top:570.92px;width:1887.1999999999998px;height:57.28px;background:#fff"></div><div style="position:absolute;left:15.6px;top:587.7199999999999px;width:13.1px;height:13.7px;border:1.3px solid #808080;border-radius:3px;background:#fff"></div><div style="position:absolute;left:77.60000000000002px;top:586.02px;width:77.7px;height:26.9px;background:#2c3e50;border-radius:3px;color:#fff;font-size:16px"><span style="position:absolute;left:7px;top:-1px;line-height:27px;font-size:15.5px">操作</span><span style="position:absolute;left:43.4px;top:0;width:1px;height:27px;background:#3b4b5b"></span><span style="position:absolute;left:55.4px;top:11px"><svg width="10.6" height="5.2" viewBox="0 0 11 6" style=""><path d="M0 0 L11 0 L5.5 6 Z" fill="#fff"/></svg></span></div><div style="position:absolute;left:160.0px;top:586.02px;width:59.5px;height:26.9px;background:#18bc9c;border-radius:3px;color:#fff;font-size:16px"><span style="position:absolute;left:7px;top:6px"><svg width="11.4" height="15" viewBox="0 0 11 15" style=""><path fill="#fff" d="M0 0.5 L11 0.5 L11 7.5 C11 11 8 13.5 5.5 14.8 C3 13.5 0 11 0 7.5 Z"/><path fill="#18bc9c" d="M5.5 2.3 L9.2 2.3 L9.2 7.5 C9.2 10 7.3 11.8 5.5 12.8 Z"/></svg></span><span style="position:absolute;left:22.8px;top:-0.5px;line-height:27px;font-size:15.5px">派单</span></div><div style="position:absolute;left:224.70000000000005px;top:586.02px;width:63.8px;height:26.9px;background:#e74c3c;border-radius:3px;color:#fff;font-size:16px"><span style="position:absolute;left:7.1px;top:4.9px"><svg width="16" height="14.7" viewBox="0 0 16 15" style=""><path fill="#fff" fill-rule="evenodd" d="M5 0 L11 0 L15.9 7.6 L13.3 14.7 L2.8 14.7 L0 7.6 Z M8 2.4 L12.7 10.3 L3.3 10.3 Z"/><g stroke="#e74c3c" stroke-width="1.5"><path d="M7.6 10 L7.6 15.5"/><path d="M5.9 5.6 L2.5 3.2"/><path d="M10.4 5.6 L13.8 3.2"/></g><path fill="#fff" d="M11 0 L14.3 2 L12.8 5.5 Z"/></svg></span><span style="position:absolute;left:26.4px;top:-0.5px;line-height:27px;font-size:15.5px">爆单</span></div><div style="position:absolute;left:317.5px;top:570.2199999999999px;width:162px;height:57.28px;line-height:57.28px;text-align:center;font-size:19px;color:#333"><span style="display:inline-block;transform:scaleX(0.92)">09988778899</span></div><div style="position:absolute;left:479.5px;top:570.2199999999999px;width:111px;height:57.28px;line-height:57.28px;text-align:center;font-size:19px;color:#333"><span style="display:inline-block;transform:scaleX(0.92)">Lv 1</span></div><div style="position:absolute;left:590.5px;top:570.2199999999999px;width:69.20000000000005px;height:57.28px;line-height:57.28px;text-align:center;font-size:19px;color:#333"><span style="display:inline-block;transform:scaleX(0.92)">-</span></div><div style="position:absolute;left:659.7px;top:570.2199999999999px;width:110.09999999999991px;height:57.28px;line-height:57.28px;text-align:center;font-size:19px;color:#333"><span style="display:inline-block;transform:scaleX(0.92)">-</span></div><div style="position:absolute;left:769.8px;top:570.2199999999999px;width:111.40000000000009px;height:57.28px;line-height:57.28px;text-align:center;font-size:19px;color:#333"><span style="display:inline-block;transform:scaleX(0.92)">6</span></div><div style="position:absolute;left:881.2px;top:570.2199999999999px;width:137.70000000000005px;height:57.28px;line-height:57.28px;text-align:center;font-size:19px;color:#333"><span style="display:inline-block;transform:scaleX(0.92)">652.30</span></div><div style="position:absolute;left:1018.9000000000001px;top:570.2199999999999px;width:111.09999999999991px;height:57.28px;line-height:57.28px;text-align:center;font-size:19px;color:#333"><span style="display:inline-block;transform:scaleX(0.92)">0.00</span></div><div style="position:absolute;left:1130.0px;top:570.2199999999999px;width:163.0px;height:57.28px;line-height:57.28px;text-align:center;font-size:19px;color:#333"><span style="display:inline-block;transform:scaleX(0.92)">sky</span></div><div style="position:absolute;left:1293.0px;top:570.2199999999999px;width:118.20000000000005px;height:57.28px;line-height:57.28px;text-align:center;font-size:19px;color:#333"><span style="display:inline-block;transform:scaleX(0.92)">Q7ZNAD</span></div><div style="position:absolute;left:1428.7px;top:586.2199999999999px;width:36.7px;height:22.9px;border-radius:12px;background:#ced4dd;box-sizing:border-box"><span style="position:absolute;left:2.5px;top:2.5px;width:17.8px;height:17.8px;border-radius:50%;background:#fff"></span></div><div style="position:absolute;left:1500.15px;top:586.2199999999999px;width:36.7px;height:22.9px;border-radius:12px;background:#ced4dd;box-sizing:border-box"><span style="position:absolute;left:2.5px;top:2.5px;width:17.8px;height:17.8px;border-radius:50%;background:#fff"></span></div><div style="position:absolute;left:1588.7px;top:590.7199999999999px;width:42.2px;height:20.4px;background:#18bc9c;border-radius:3px;color:#fff;font-weight:bold;font-size:13.3px;line-height:20.4px;text-align:center">离线</div><div style="position:absolute;left:1665.5px;top:570.2199999999999px;width:221.69999999999982px;height:57.28px;line-height:57.28px;text-align:center;font-size:19px;color:#333"><span style="display:inline-block;transform:scaleX(0.92)">2024-09-14 14:13:48</span></div><div style="position:absolute;left:0px;top:628.1999999999999px;width:1887.1999999999998px;height:57.28px;background:#f9f9f9"></div><div style="position:absolute;left:15.6px;top:644.9999999999999px;width:13.1px;height:13.7px;border:1.3px solid #808080;border-radius:3px;background:#fff"></div><div style="position:absolute;left:77.60000000000002px;top:643.3px;width:77.7px;height:26.9px;background:#2c3e50;border-radius:3px;color:#fff;font-size:16px"><span style="position:absolute;left:7px;top:-1px;line-height:27px;font-size:15.5px">操作</span><span style="position:absolute;left:43.4px;top:0;width:1px;height:27px;background:#3b4b5b"></span><span style="position:absolute;left:55.4px;top:11px"><svg width="10.6" height="5.2" viewBox="0 0 11 6" style=""><path d="M0 0 L11 0 L5.5 6 Z" fill="#fff"/></svg></span></div><div style="position:absolute;left:160.0px;top:643.3px;width:59.5px;height:26.9px;background:#18bc9c;border-radius:3px;color:#fff;font-size:16px"><span style="position:absolute;left:7px;top:6px"><svg width="11.4" height="15" viewBox="0 0 11 15" style=""><path fill="#fff" d="M0 0.5 L11 0.5 L11 7.5 C11 11 8 13.5 5.5 14.8 C3 13.5 0 11 0 7.5 Z"/><path fill="#18bc9c" d="M5.5 2.3 L9.2 2.3 L9.2 7.5 C9.2 10 7.3 11.8 5.5 12.8 Z"/></svg></span><span style="position:absolute;left:22.8px;top:-0.5px;line-height:27px;font-size:15.5px">派单</span></div><div style="position:absolute;left:224.70000000000005px;top:643.3px;width:63.8px;height:26.9px;background:#e74c3c;border-radius:3px;color:#fff;font-size:16px"><span style="position:absolute;left:7.1px;top:4.9px"><svg width="16" height="14.7" viewBox="0 0 16 15" style=""><path fill="#fff" fill-rule="evenodd" d="M5 0 L11 0 L15.9 7.6 L13.3 14.7 L2.8 14.7 L0 7.6 Z M8 2.4 L12.7 10.3 L3.3 10.3 Z"/><g stroke="#e74c3c" stroke-width="1.5"><path d="M7.6 10 L7.6 15.5"/><path d="M5.9 5.6 L2.5 3.2"/><path d="M10.4 5.6 L13.8 3.2"/></g><path fill="#fff" d="M11 0 L14.3 2 L12.8 5.5 Z"/></svg></span><span style="position:absolute;left:26.4px;top:-0.5px;line-height:27px;font-size:15.5px">爆单</span></div><div style="position:absolute;left:317.5px;top:627.4999999999999px;width:162px;height:57.28px;line-height:57.28px;text-align:center;font-size:19px;color:#333"><span style="display:inline-block;transform:scaleX(0.92)">123000</span></div><div style="position:absolute;left:479.5px;top:627.4999999999999px;width:111px;height:57.28px;line-height:57.28px;text-align:center;font-size:19px;color:#333"><span style="display:inline-block;transform:scaleX(0.92)">Lv 1</span></div><div style="position:absolute;left:590.5px;top:627.4999999999999px;width:69.20000000000005px;height:57.28px;line-height:57.28px;text-align:center;font-size:19px;color:#333"><span style="display:inline-block;transform:scaleX(0.92)">-</span></div><div style="position:absolute;left:659.7px;top:627.4999999999999px;width:110.09999999999991px;height:57.28px;line-height:57.28px;text-align:center;font-size:19px;color:#333"><span style="display:inline-block;transform:scaleX(0.92)">-</span></div><div style="position:absolute;left:769.8px;top:627.4999999999999px;width:111.40000000000009px;height:57.28px;line-height:57.28px;text-align:center;font-size:19px;color:#333"><span style="display:inline-block;transform:scaleX(0.92)">8</span></div><div style="position:absolute;left:881.2px;top:627.4999999999999px;width:137.70000000000005px;height:57.28px;line-height:57.28px;text-align:center;font-size:19px;color:#333"><span style="display:inline-block;transform:scaleX(0.92)">66851.44</span></div><div style="position:absolute;left:1018.9000000000001px;top:627.4999999999999px;width:111.09999999999991px;height:57.28px;line-height:57.28px;text-align:center;font-size:19px;color:#333"><span style="display:inline-block;transform:scaleX(0.92)">0.00</span></div><div style="position:absolute;left:1130.0px;top:627.4999999999999px;width:163.0px;height:57.28px;line-height:57.28px;text-align:center;font-size:19px;color:#333"><span style="display:inline-block;transform:scaleX(0.92)">69949514872</span></div><div style="position:absolute;left:1293.0px;top:627.4999999999999px;width:118.20000000000005px;height:57.28px;line-height:57.28px;text-align:center;font-size:19px;color:#333"><span style="display:inline-block;transform:scaleX(0.92)">DASKXH</span></div><div style="position:absolute;left:1428.7px;top:643.4999999999999px;width:36.7px;height:22.9px;border-radius:12px;background:#18bc9c;box-sizing:border-box"><span style="position:absolute;right:2.5px;top:2.5px;width:17.8px;height:17.8px;border-radius:50%;background:#fff"></span></div><div style="position:absolute;left:1500.15px;top:643.4999999999999px;width:36.7px;height:22.9px;border-radius:12px;background:#ced4dd;box-sizing:border-box"><span style="position:absolute;left:2.5px;top:2.5px;width:17.8px;height:17.8px;border-radius:50%;background:#fff"></span></div><div style="position:absolute;left:1588.7px;top:647.9999999999999px;width:42.2px;height:20.4px;background:#18bc9c;border-radius:3px;color:#fff;font-weight:bold;font-size:13.3px;line-height:20.4px;text-align:center">离线</div><div style="position:absolute;left:1665.5px;top:627.4999999999999px;width:221.69999999999982px;height:57.28px;line-height:57.28px;text-align:center;font-size:19px;color:#333"><span style="display:inline-block;transform:scaleX(0.92)">2024-08-09 20:49:09</span></div><div style="position:absolute;left:0px;top:685.48px;width:1887.1999999999998px;height:57.28px;background:#fff"></div><div style="position:absolute;left:15.6px;top:702.28px;width:13.1px;height:13.7px;border:1.3px solid #808080;border-radius:3px;background:#fff"></div><div style="position:absolute;left:77.60000000000002px;top:700.58px;width:77.7px;height:26.9px;background:#2c3e50;border-radius:3px;color:#fff;font-size:16px"><span style="position:absolute;left:7px;top:-1px;line-height:27px;font-size:15.5px">操作</span><span style="position:absolute;left:43.4px;top:0;width:1px;height:27px;background:#3b4b5b"></span><span style="position:absolute;left:55.4px;top:11px"><svg width="10.6" height="5.2" viewBox="0 0 11 6" style=""><path d="M0 0 L11 0 L5.5 6 Z" fill="#fff"/></svg></span></div><div style="position:absolute;left:160.0px;top:700.58px;width:59.5px;height:26.9px;background:#18bc9c;border-radius:3px;color:#fff;font-size:16px"><span style="position:absolute;left:7px;top:6px"><svg width="11.4" height="15" viewBox="0 0 11 15" style=""><path fill="#fff" d="M0 0.5 L11 0.5 L11 7.5 C11 11 8 13.5 5.5 14.8 C3 13.5 0 11 0 7.5 Z"/><path fill="#18bc9c" d="M5.5 2.3 L9.2 2.3 L9.2 7.5 C9.2 10 7.3 11.8 5.5 12.8 Z"/></svg></span><span style="position:absolute;left:22.8px;top:-0.5px;line-height:27px;font-size:15.5px">派单</span></div><div style="position:absolute;left:224.70000000000005px;top:700.58px;width:63.8px;height:26.9px;background:#e74c3c;border-radius:3px;color:#fff;font-size:16px"><span style="position:absolute;left:7.1px;top:4.9px"><svg width="16" height="14.7" viewBox="0 0 16 15" style=""><path fill="#fff" fill-rule="evenodd" d="M5 0 L11 0 L15.9 7.6 L13.3 14.7 L2.8 14.7 L0 7.6 Z M8 2.4 L12.7 10.3 L3.3 10.3 Z"/><g stroke="#e74c3c" stroke-width="1.5"><path d="M7.6 10 L7.6 15.5"/><path d="M5.9 5.6 L2.5 3.2"/><path d="M10.4 5.6 L13.8 3.2"/></g><path fill="#fff" d="M11 0 L14.3 2 L12.8 5.5 Z"/></svg></span><span style="position:absolute;left:26.4px;top:-0.5px;line-height:27px;font-size:15.5px">爆单</span></div><div style="position:absolute;left:317.5px;top:684.78px;width:162px;height:57.28px;line-height:57.28px;text-align:center;font-size:19px;color:#333"><span style="display:inline-block;transform:scaleX(0.92)">69949514872</span></div><div style="position:absolute;left:479.5px;top:684.78px;width:111px;height:57.28px;line-height:57.28px;text-align:center;font-size:19px;color:#333"><span style="display:inline-block;transform:scaleX(0.92)">Lv 1</span></div><div style="position:absolute;left:590.5px;top:684.78px;width:69.20000000000005px;height:57.28px;line-height:57.28px;text-align:center;font-size:19px;color:#333"><span style="display:inline-block;transform:scaleX(0.92)">-</span></div><div style="position:absolute;left:659.7px;top:684.78px;width:110.09999999999991px;height:57.28px;line-height:57.28px;text-align:center;font-size:19px;color:#333"><span style="display:inline-block;transform:scaleX(0.92)">-</span></div><div style="position:absolute;left:769.8px;top:684.78px;width:111.40000000000009px;height:57.28px;line-height:57.28px;text-align:center;font-size:19px;color:#333"><span style="display:inline-block;transform:scaleX(0.92)">0</span></div><div style="position:absolute;left:881.2px;top:684.78px;width:137.70000000000005px;height:57.28px;line-height:57.28px;text-align:center;font-size:19px;color:#333"><span style="display:inline-block;transform:scaleX(0.92)">119.67</span></div><div style="position:absolute;left:1018.9000000000001px;top:684.78px;width:111.09999999999991px;height:57.28px;line-height:57.28px;text-align:center;font-size:19px;color:#333"><span style="display:inline-block;transform:scaleX(0.92)">0.00</span></div><div style="position:absolute;left:1130.0px;top:684.78px;width:163.0px;height:57.28px;line-height:57.28px;text-align:center;font-size:19px;color:#333"><span style="display:inline-block;transform:scaleX(0.92)">niuge</span></div><div style="position:absolute;left:1293.0px;top:684.78px;width:118.20000000000005px;height:57.28px;line-height:57.28px;text-align:center;font-size:19px;color:#333"><span style="display:inline-block;transform:scaleX(0.92)">MP8YT2</span></div><div style="position:absolute;left:1428.7px;top:700.78px;width:36.7px;height:22.9px;border-radius:12px;background:#ced4dd;box-sizing:border-box"><span style="position:absolute;left:2.5px;top:2.5px;width:17.8px;height:17.8px;border-radius:50%;background:#fff"></span></div><div style="position:absolute;left:1500.15px;top:700.78px;width:36.7px;height:22.9px;border-radius:12px;background:#ced4dd;box-sizing:border-box"><span style="position:absolute;left:2.5px;top:2.5px;width:17.8px;height:17.8px;border-radius:50%;background:#fff"></span></div><div style="position:absolute;left:1588.7px;top:705.28px;width:42.2px;height:20.4px;background:#18bc9c;border-radius:3px;color:#fff;font-weight:bold;font-size:13.3px;line-height:20.4px;text-align:center">离线</div><div style="position:absolute;left:1665.5px;top:684.78px;width:221.69999999999982px;height:57.28px;line-height:57.28px;text-align:center;font-size:19px;color:#333"><span style="display:inline-block;transform:scaleX(0.92)">2024-08-08 20:02:05</span></div><div style="position:absolute;left:0px;top:742.76px;width:1887.1999999999998px;height:57.28px;background:#f9f9f9"></div><div style="position:absolute;left:15.6px;top:759.56px;width:13.1px;height:13.7px;border:1.3px solid #808080;border-radius:3px;background:#fff"></div><div style="position:absolute;left:77.60000000000002px;top:757.86px;width:77.7px;height:26.9px;background:#2c3e50;border-radius:3px;color:#fff;font-size:16px"><span style="position:absolute;left:7px;top:-1px;line-height:27px;font-size:15.5px">操作</span><span style="position:absolute;left:43.4px;top:0;width:1px;height:27px;background:#3b4b5b"></span><span style="position:absolute;left:55.4px;top:11px"><svg width="10.6" height="5.2" viewBox="0 0 11 6" style=""><path d="M0 0 L11 0 L5.5 6 Z" fill="#fff"/></svg></span></div><div style="position:absolute;left:160.0px;top:757.86px;width:59.5px;height:26.9px;background:#18bc9c;border-radius:3px;color:#fff;font-size:16px"><span style="position:absolute;left:7px;top:6px"><svg width="11.4" height="15" viewBox="0 0 11 15" style=""><path fill="#fff" d="M0 0.5 L11 0.5 L11 7.5 C11 11 8 13.5 5.5 14.8 C3 13.5 0 11 0 7.5 Z"/><path fill="#18bc9c" d="M5.5 2.3 L9.2 2.3 L9.2 7.5 C9.2 10 7.3 11.8 5.5 12.8 Z"/></svg></span><span style="position:absolute;left:22.8px;top:-0.5px;line-height:27px;font-size:15.5px">派单</span></div><div style="position:absolute;left:224.70000000000005px;top:757.86px;width:63.8px;height:26.9px;background:#e74c3c;border-radius:3px;color:#fff;font-size:16px"><span style="position:absolute;left:7.1px;top:4.9px"><svg width="16" height="14.7" viewBox="0 0 16 15" style=""><path fill="#fff" fill-rule="evenodd" d="M5 0 L11 0 L15.9 7.6 L13.3 14.7 L2.8 14.7 L0 7.6 Z M8 2.4 L12.7 10.3 L3.3 10.3 Z"/><g stroke="#e74c3c" stroke-width="1.5"><path d="M7.6 10 L7.6 15.5"/><path d="M5.9 5.6 L2.5 3.2"/><path d="M10.4 5.6 L13.8 3.2"/></g><path fill="#fff" d="M11 0 L14.3 2 L12.8 5.5 Z"/></svg></span><span style="position:absolute;left:26.4px;top:-0.5px;line-height:27px;font-size:15.5px">爆单</span></div><div style="position:absolute;left:317.5px;top:742.06px;width:162px;height:57.28px;line-height:57.28px;text-align:center;font-size:19px;color:#333"><span style="display:inline-block;transform:scaleX(0.92)">69942854672</span></div><div style="position:absolute;left:479.5px;top:742.06px;width:111px;height:57.28px;line-height:57.28px;text-align:center;font-size:19px;color:#333"><span style="display:inline-block;transform:scaleX(0.92)">Lv 1</span></div><div style="position:absolute;left:590.5px;top:742.06px;width:69.20000000000005px;height:57.28px;line-height:57.28px;text-align:center;font-size:19px;color:#333"><span style="display:inline-block;transform:scaleX(0.92)">-</span></div><div style="position:absolute;left:659.7px;top:742.06px;width:110.09999999999991px;height:57.28px;line-height:57.28px;text-align:center;font-size:19px;color:#333"><span style="display:inline-block;transform:scaleX(0.92)">-</span></div><div style="position:absolute;left:769.8px;top:742.06px;width:111.40000000000009px;height:57.28px;line-height:57.28px;text-align:center;font-size:19px;color:#333"><span style="display:inline-block;transform:scaleX(0.92)">0</span></div><div style="position:absolute;left:881.2px;top:742.06px;width:137.70000000000005px;height:57.28px;line-height:57.28px;text-align:center;font-size:19px;color:#333"><span style="display:inline-block;transform:scaleX(0.92)">0.00</span></div><div style="position:absolute;left:1018.9000000000001px;top:742.06px;width:111.09999999999991px;height:57.28px;line-height:57.28px;text-align:center;font-size:19px;color:#333"><span style="display:inline-block;transform:scaleX(0.92)">0.00</span></div><div style="position:absolute;left:1130.0px;top:742.06px;width:163.0px;height:57.28px;line-height:57.28px;text-align:center;font-size:19px;color:#333"><span style="display:inline-block;transform:scaleX(0.92)">niuge</span></div><div style="position:absolute;left:1293.0px;top:742.06px;width:118.20000000000005px;height:57.28px;line-height:57.28px;text-align:center;font-size:19px;color:#333"><span style="display:inline-block;transform:scaleX(0.92)">HLZ9DE</span></div><div style="position:absolute;left:1428.7px;top:758.06px;width:36.7px;height:22.9px;border-radius:12px;background:#ced4dd;box-sizing:border-box"><span style="position:absolute;left:2.5px;top:2.5px;width:17.8px;height:17.8px;border-radius:50%;background:#fff"></span></div><div style="position:absolute;left:1500.15px;top:758.06px;width:36.7px;height:22.9px;border-radius:12px;background:#ced4dd;box-sizing:border-box"><span style="position:absolute;left:2.5px;top:2.5px;width:17.8px;height:17.8px;border-radius:50%;background:#fff"></span></div><div style="position:absolute;left:1588.7px;top:762.56px;width:42.2px;height:20.4px;background:#18bc9c;border-radius:3px;color:#fff;font-weight:bold;font-size:13.3px;line-height:20.4px;text-align:center">离线</div><div style="position:absolute;left:1665.5px;top:742.06px;width:221.69999999999982px;height:57.28px;line-height:57.28px;text-align:center;font-size:19px;color:#333"><span style="display:inline-block;transform:scaleX(0.92)">2024-08-08 20:00:40</span></div><div style="position:absolute;left:0px;top:800.04px;width:1887.1999999999998px;height:57.28px;background:#fff"></div><div style="position:absolute;left:15.6px;top:816.8399999999999px;width:13.1px;height:13.7px;border:1.3px solid #808080;border-radius:3px;background:#fff"></div><div style="position:absolute;left:77.60000000000002px;top:815.14px;width:77.7px;height:26.9px;background:#2c3e50;border-radius:3px;color:#fff;font-size:16px"><span style="position:absolute;left:7px;top:-1px;line-height:27px;font-size:15.5px">操作</span><span style="position:absolute;left:43.4px;top:0;width:1px;height:27px;background:#3b4b5b"></span><span style="position:absolute;left:55.4px;top:11px"><svg width="10.6" height="5.2" viewBox="0 0 11 6" style=""><path d="M0 0 L11 0 L5.5 6 Z" fill="#fff"/></svg></span></div><div style="position:absolute;left:160.0px;top:815.14px;width:59.5px;height:26.9px;background:#18bc9c;border-radius:3px;color:#fff;font-size:16px"><span style="position:absolute;left:7px;top:6px"><svg width="11.4" height="15" viewBox="0 0 11 15" style=""><path fill="#fff" d="M0 0.5 L11 0.5 L11 7.5 C11 11 8 13.5 5.5 14.8 C3 13.5 0 11 0 7.5 Z"/><path fill="#18bc9c" d="M5.5 2.3 L9.2 2.3 L9.2 7.5 C9.2 10 7.3 11.8 5.5 12.8 Z"/></svg></span><span style="position:absolute;left:22.8px;top:-0.5px;line-height:27px;font-size:15.5px">派单</span></div><div style="position:absolute;left:224.70000000000005px;top:815.14px;width:63.8px;height:26.9px;background:#e74c3c;border-radius:3px;color:#fff;font-size:16px"><span style="position:absolute;left:7.1px;top:4.9px"><svg width="16" height="14.7" viewBox="0 0 16 15" style=""><path fill="#fff" fill-rule="evenodd" d="M5 0 L11 0 L15.9 7.6 L13.3 14.7 L2.8 14.7 L0 7.6 Z M8 2.4 L12.7 10.3 L3.3 10.3 Z"/><g stroke="#e74c3c" stroke-width="1.5"><path d="M7.6 10 L7.6 15.5"/><path d="M5.9 5.6 L2.5 3.2"/><path d="M10.4 5.6 L13.8 3.2"/></g><path fill="#fff" d="M11 0 L14.3 2 L12.8 5.5 Z"/></svg></span><span style="position:absolute;left:26.4px;top:-0.5px;line-height:27px;font-size:15.5px">爆单</span></div><div style="position:absolute;left:317.5px;top:799.3399999999999px;width:162px;height:57.28px;line-height:57.28px;text-align:center;font-size:19px;color:#333"><span style="display:inline-block;transform:scaleX(0.92)">69942856257</span></div><div style="position:absolute;left:479.5px;top:799.3399999999999px;width:111px;height:57.28px;line-height:57.28px;text-align:center;font-size:19px;color:#333"><span style="display:inline-block;transform:scaleX(0.92)">Lv 1</span></div><div style="position:absolute;left:590.5px;top:799.3399999999999px;width:69.20000000000005px;height:57.28px;line-height:57.28px;text-align:center;font-size:19px;color:#333"><span style="display:inline-block;transform:scaleX(0.92)">-</span></div><div style="position:absolute;left:659.7px;top:799.3399999999999px;width:110.09999999999991px;height:57.28px;line-height:57.28px;text-align:center;font-size:19px;color:#333"><span style="display:inline-block;transform:scaleX(0.92)">-</span></div><div style="position:absolute;left:769.8px;top:799.3399999999999px;width:111.40000000000009px;height:57.28px;line-height:57.28px;text-align:center;font-size:19px;color:#333"><span style="display:inline-block;transform:scaleX(0.92)">0</span></div><div style="position:absolute;left:881.2px;top:799.3399999999999px;width:137.70000000000005px;height:57.28px;line-height:57.28px;text-align:center;font-size:19px;color:#333"><span style="display:inline-block;transform:scaleX(0.92)">0.00</span></div><div style="position:absolute;left:1018.9000000000001px;top:799.3399999999999px;width:111.09999999999991px;height:57.28px;line-height:57.28px;text-align:center;font-size:19px;color:#333"><span style="display:inline-block;transform:scaleX(0.92)">0.00</span></div><div style="position:absolute;left:1130.0px;top:799.3399999999999px;width:163.0px;height:57.28px;line-height:57.28px;text-align:center;font-size:19px;color:#333"><span style="display:inline-block;transform:scaleX(0.92)">niuge</span></div><div style="position:absolute;left:1293.0px;top:799.3399999999999px;width:118.20000000000005px;height:57.28px;line-height:57.28px;text-align:center;font-size:19px;color:#333"><span style="display:inline-block;transform:scaleX(0.92)">DF7RXL</span></div><div style="position:absolute;left:1428.7px;top:815.3399999999999px;width:36.7px;height:22.9px;border-radius:12px;background:#ced4dd;box-sizing:border-box"><span style="position:absolute;left:2.5px;top:2.5px;width:17.8px;height:17.8px;border-radius:50%;background:#fff"></span></div><div style="position:absolute;left:1500.15px;top:815.3399999999999px;width:36.7px;height:22.9px;border-radius:12px;background:#ced4dd;box-sizing:border-box"><span style="position:absolute;left:2.5px;top:2.5px;width:17.8px;height:17.8px;border-radius:50%;background:#fff"></span></div><div style="position:absolute;left:1588.7px;top:819.8399999999999px;width:42.2px;height:20.4px;background:#18bc9c;border-radius:3px;color:#fff;font-weight:bold;font-size:13.3px;line-height:20.4px;text-align:center">离线</div><div style="position:absolute;left:1665.5px;top:799.3399999999999px;width:221.69999999999982px;height:57.28px;line-height:57.28px;text-align:center;font-size:19px;color:#333"><span style="display:inline-block;transform:scaleX(0.92)">2024-08-08 19:59:30</span></div><div style="position:absolute;left:0px;top:857.32px;width:1887.1999999999998px;height:57.28px;background:#f9f9f9"></div><div style="position:absolute;left:15.6px;top:874.12px;width:13.1px;height:13.7px;border:1.3px solid #808080;border-radius:3px;background:#fff"></div><div style="position:absolute;left:77.60000000000002px;top:872.4200000000001px;width:77.7px;height:26.9px;background:#2c3e50;border-radius:3px;color:#fff;font-size:16px"><span style="position:absolute;left:7px;top:-1px;line-height:27px;font-size:15.5px">操作</span><span style="position:absolute;left:43.4px;top:0;width:1px;height:27px;background:#3b4b5b"></span><span style="position:absolute;left:55.4px;top:11px"><svg width="10.6" height="5.2" viewBox="0 0 11 6" style=""><path d="M0 0 L11 0 L5.5 6 Z" fill="#fff"/></svg></span></div><div style="position:absolute;left:160.0px;top:872.4200000000001px;width:59.5px;height:26.9px;background:#18bc9c;border-radius:3px;color:#fff;font-size:16px"><span style="position:absolute;left:7px;top:6px"><svg width="11.4" height="15" viewBox="0 0 11 15" style=""><path fill="#fff" d="M0 0.5 L11 0.5 L11 7.5 C11 11 8 13.5 5.5 14.8 C3 13.5 0 11 0 7.5 Z"/><path fill="#18bc9c" d="M5.5 2.3 L9.2 2.3 L9.2 7.5 C9.2 10 7.3 11.8 5.5 12.8 Z"/></svg></span><span style="position:absolute;left:22.8px;top:-0.5px;line-height:27px;font-size:15.5px">派单</span></div><div style="position:absolute;left:224.70000000000005px;top:872.4200000000001px;width:63.8px;height:26.9px;background:#e74c3c;border-radius:3px;color:#fff;font-size:16px"><span style="position:absolute;left:7.1px;top:4.9px"><svg width="16" height="14.7" viewBox="0 0 16 15" style=""><path fill="#fff" fill-rule="evenodd" d="M5 0 L11 0 L15.9 7.6 L13.3 14.7 L2.8 14.7 L0 7.6 Z M8 2.4 L12.7 10.3 L3.3 10.3 Z"/><g stroke="#e74c3c" stroke-width="1.5"><path d="M7.6 10 L7.6 15.5"/><path d="M5.9 5.6 L2.5 3.2"/><path d="M10.4 5.6 L13.8 3.2"/></g><path fill="#fff" d="M11 0 L14.3 2 L12.8 5.5 Z"/></svg></span><span style="position:absolute;left:26.4px;top:-0.5px;line-height:27px;font-size:15.5px">爆单</span></div><div style="position:absolute;left:317.5px;top:856.62px;width:162px;height:57.28px;line-height:57.28px;text-align:center;font-size:19px;color:#333"><span style="display:inline-block;transform:scaleX(0.92)">69986556257</span></div><div style="position:absolute;left:479.5px;top:856.62px;width:111px;height:57.28px;line-height:57.28px;text-align:center;font-size:19px;color:#333"><span style="display:inline-block;transform:scaleX(0.92)">Lv 1</span></div><div style="position:absolute;left:590.5px;top:856.62px;width:69.20000000000005px;height:57.28px;line-height:57.28px;text-align:center;font-size:19px;color:#333"><span style="display:inline-block;transform:scaleX(0.92)">-</span></div><div style="position:absolute;left:659.7px;top:856.62px;width:110.09999999999991px;height:57.28px;line-height:57.28px;text-align:center;font-size:19px;color:#333"><span style="display:inline-block;transform:scaleX(0.92)">-</span></div><div style="position:absolute;left:769.8px;top:856.62px;width:111.40000000000009px;height:57.28px;line-height:57.28px;text-align:center;font-size:19px;color:#333"><span style="display:inline-block;transform:scaleX(0.92)">0</span></div><div style="position:absolute;left:881.2px;top:856.62px;width:137.70000000000005px;height:57.28px;line-height:57.28px;text-align:center;font-size:19px;color:#333"><span style="display:inline-block;transform:scaleX(0.92)">0.00</span></div><div style="position:absolute;left:1018.9000000000001px;top:856.62px;width:111.09999999999991px;height:57.28px;line-height:57.28px;text-align:center;font-size:19px;color:#333"><span style="display:inline-block;transform:scaleX(0.92)">0.00</span></div><div style="position:absolute;left:1130.0px;top:856.62px;width:163.0px;height:57.28px;line-height:57.28px;text-align:center;font-size:19px;color:#333"><span style="display:inline-block;transform:scaleX(0.92)">niuge</span></div><div style="position:absolute;left:1293.0px;top:856.62px;width:118.20000000000005px;height:57.28px;line-height:57.28px;text-align:center;font-size:19px;color:#333"><span style="display:inline-block;transform:scaleX(0.92)">CXGH2W</span></div><div style="position:absolute;left:1428.7px;top:872.62px;width:36.7px;height:22.9px;border-radius:12px;background:#ced4dd;box-sizing:border-box"><span style="position:absolute;left:2.5px;top:2.5px;width:17.8px;height:17.8px;border-radius:50%;background:#fff"></span></div><div style="position:absolute;left:1500.15px;top:872.62px;width:36.7px;height:22.9px;border-radius:12px;background:#ced4dd;box-sizing:border-box"><span style="position:absolute;left:2.5px;top:2.5px;width:17.8px;height:17.8px;border-radius:50%;background:#fff"></span></div><div style="position:absolute;left:1588.7px;top:877.12px;width:42.2px;height:20.4px;background:#18bc9c;border-radius:3px;color:#fff;font-weight:bold;font-size:13.3px;line-height:20.4px;text-align:center">离线</div><div style="position:absolute;left:1665.5px;top:856.62px;width:221.69999999999982px;height:57.28px;line-height:57.28px;text-align:center;font-size:19px;color:#333"><span style="display:inline-block;transform:scaleX(0.92)">2024-08-08 19:57:39</span></div><div style="position:absolute;left:47.39999999999998px;top:0px;width:1px;height:914.6px;background:#f2f2f2"></div><div style="position:absolute;left:317.0px;top:0px;width:1px;height:914.6px;background:#f2f2f2"></div><div style="position:absolute;left:479.0px;top:0px;width:1px;height:914.6px;background:#f2f2f2"></div><div style="position:absolute;left:590.0px;top:0px;width:1px;height:914.6px;background:#f2f2f2"></div><div style="position:absolute;left:659.2px;top:0px;width:1px;height:914.6px;background:#f2f2f2"></div><div style="position:absolute;left:769.3px;top:0px;width:1px;height:914.6px;background:#f2f2f2"></div><div style="position:absolute;left:880.7px;top:0px;width:1px;height:914.6px;background:#f2f2f2"></div><div style="position:absolute;left:1018.4000000000001px;top:0px;width:1px;height:914.6px;background:#f2f2f2"></div><div style="position:absolute;left:1129.5px;top:0px;width:1px;height:914.6px;background:#f2f2f2"></div><div style="position:absolute;left:1292.5px;top:0px;width:1px;height:914.6px;background:#f2f2f2"></div><div style="position:absolute;left:1410.7px;top:0px;width:1px;height:914.6px;background:#f2f2f2"></div><div style="position:absolute;left:1482.4px;top:0px;width:1px;height:914.6px;background:#f2f2f2"></div><div style="position:absolute;left:1553.6px;top:0px;width:1px;height:914.6px;background:#f2f2f2"></div><div style="position:absolute;left:1665.0px;top:0px;width:1px;height:914.6px;background:#f2f2f2"></div></div><div style="position:absolute;left:350.5px;top:1182px;font-size:18px;line-height:28px;color:#444;white-space:nowrap;letter-spacing:-0.18px">显示第 1 到第 15 条记录，总共 27 条记录 每页显示</div><div style="position:absolute;left:756.4px;top:1176.3px;width:64.6px;height:40px;border:1px solid #ddd;border-radius:4px;background:#f4f4f4;font-size:17px;color:#333"><span style="position:absolute;left:15.5px;top:6px;line-height:28px;color:#444">15</span><span style="position:absolute;left:38.7px;top:17.5px"><svg width="10" height="6" viewBox="0 0 10 6" style=""><path d='M0 6 L10 6 L5 0 Z' fill='#333'/></svg></span></div><div style="position:absolute;left:827.2px;top:1182px;font-size:18px;line-height:28px;color:#444;white-space:nowrap">条记录</div><div style="position:absolute;left:1835.3px;top:1173px;width:85.1px;height:40px;border:1px solid #ddd;border-radius:4px 0 0 4px;background:#f9f9f9;font-size:18px;line-height:40px;text-align:center;color:#777;box-sizing:border-box;height:42px">上一页</div><div style="position:absolute;left:1920.4px;top:1173px;width:44px;height:42px;background:#2c3e50;font-size:18px;line-height:42px;text-align:center;color:#fff">1</div><div style="position:absolute;left:1964.4px;top:1173px;width:42px;height:42px;border:1px solid #ddd;border-left:0;background:#f9f9f9;font-size:18px;line-height:40px;text-align:center;color:#555;box-sizing:border-box">2</div><div style="position:absolute;left:2006.1px;top:1173px;width:85.6px;height:42px;border:1px solid #ddd;border-left:1px solid #eee;border-radius:0 4px 4px 0;background:#f9f9f9;font-size:18px;line-height:40px;text-align:center;color:#555;box-sizing:border-box">下一页</div><div style="position:absolute;left:2099.3px;top:1173px;width:67.4px;height:42px;border:1px solid #ccd2d8;background:#fff;box-sizing:border-box"></div><div style="position:absolute;left:2173.5px;top:1174px;width:65.5px;height:42px;border:1px solid #ddd;border-radius:4px;background:#f4f4f4;font-size:18px;line-height:40px;text-align:center;color:#333;box-sizing:border-box">跳转</div><div style="position:absolute;left:2280px;top:61px;width:18px;height:1146px;background:#f9f9f9"></div><div style="position:absolute;left:2283px;top:68px;"><svg width="14" height="8" viewBox="0 0 14 8" style=""><path d="M7 0 L14 7.5 L0 7.5 Z" fill="#8a8a8a"/></svg></div><div style="position:absolute;left:2284px;top:85px;width:12px;height:1200px;background:#8a8a8a;border-radius:6px"></div><div style="position:absolute;left:2298.8px;top:0px;width:1.2px;height:1207px;background:#8f8f8f"></div></body></html>
